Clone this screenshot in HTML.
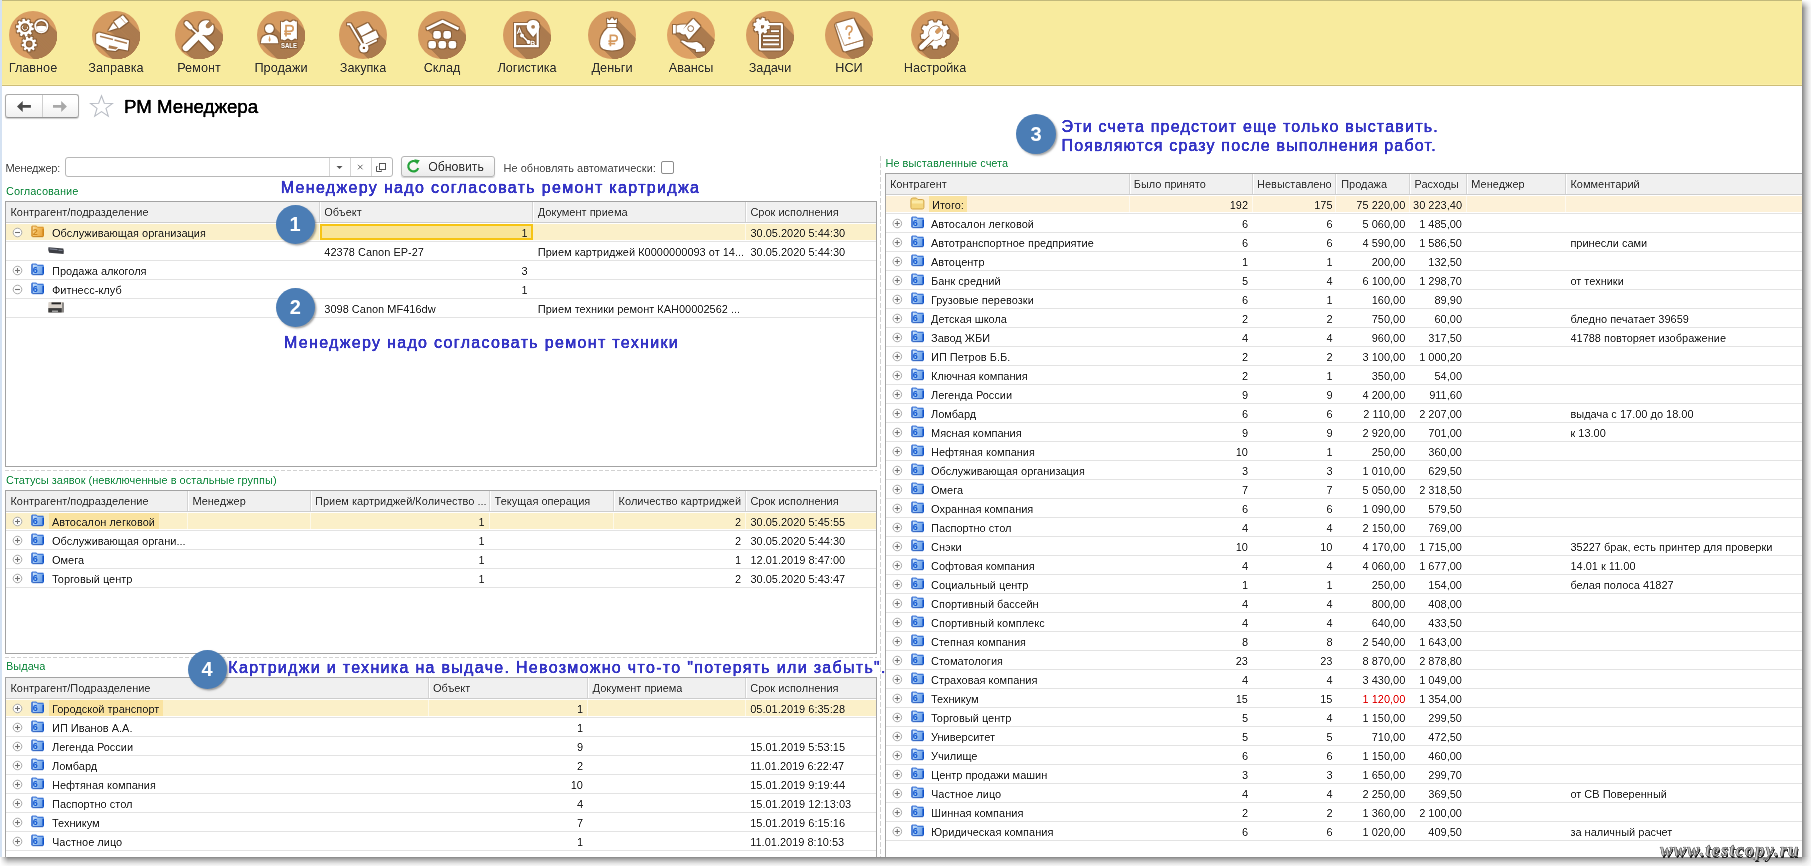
<!DOCTYPE html><html><head><meta charset="utf-8"><style>
html,body{margin:0;padding:0;}
body{width:1811px;height:866px;position:relative;overflow:hidden;background:#fff;font-family:"Liberation Sans", sans-serif;}
div{box-sizing:border-box;}
</style></head><body>
<div style="position:absolute;left:0px;top:0px;width:1802px;height:857px;background:#fff;overflow:hidden"></div>
<div style="position:absolute;left:0px;top:0px;width:2px;height:857px;background:#d5e2f2"></div>
<div style="position:absolute;left:2px;top:0px;width:1800px;height:86px;background:#f8eb9e;border-top:1px solid #c2b97b;border-bottom:1px solid #cdbd78"></div>
<div style="position:absolute;left:2px;top:84px;width:1800px;height:1px;background:#fbefa8"></div>
<svg style="position:absolute;left:0;top:0;will-change:transform" width="1000" height="86" viewBox="0 0 1000 86"><defs><g id="sil_glav"><path fill-rule="evenodd" d="M22.79 16.37 L24.90 16.98 L24.54 19.21 L22.35 19.14 L21.67 20.49 L23.01 22.22 L21.42 23.81 L19.69 22.47 L18.34 23.15 L18.41 25.34 L16.18 25.70 L15.57 23.59 L14.08 23.36 L12.85 25.17 L10.84 24.14 L11.59 22.08 L10.52 21.01 L8.46 21.76 L7.43 19.75 L9.24 18.52 L9.01 17.03 L6.90 16.42 L7.26 14.19 L9.45 14.26 L10.13 12.91 L8.79 11.18 L10.38 9.59 L12.11 10.93 L13.46 10.25 L13.39 8.06 L15.62 7.70 L16.23 9.81 L17.72 10.04 L18.95 8.23 L20.96 9.26 L20.21 11.32 L21.28 12.39 L23.34 11.64 L24.37 13.65 L22.56 14.88Z M11.5 16.7 a4.4 4.4 0 1 0 8.8 0 a4.4 4.4 0 1 0 -8.8 0Z"/><path fill-rule="evenodd" d="M25.299999999999997 15.2 a7 7 0 1 0 14 0 a7 7 0 1 0 -14 0Z M26.999999999999996 15.2 a5.3 5.3 0 1 0 10.6 0 a5.3 5.3 0 1 0 -10.6 0Z"/><path d="M27.1 15.6 Q32.3 13.8 37.5 15.6 Q37.2 20.5 32.3 20.6 Q27.4 20.5 27.1 15.6Z"/><path fill-rule="evenodd" d="M25.89 32.70 L27.80 33.27 L27.43 35.35 L25.45 35.23 L24.75 36.43 L25.85 38.09 L24.23 39.45 L22.79 38.08 L21.48 38.55 L21.26 40.53 L19.14 40.53 L18.92 38.55 L17.61 38.08 L16.17 39.45 L14.55 38.09 L15.65 36.43 L14.95 35.23 L12.97 35.35 L12.60 33.27 L14.51 32.70 L14.75 31.33 L13.15 30.15 L14.21 28.32 L16.03 29.11 L17.10 28.22 L16.63 26.29 L18.62 25.57 L19.51 27.34 L20.89 27.34 L21.78 25.57 L23.77 26.29 L23.30 28.22 L24.37 29.11 L26.19 28.32 L27.25 30.15 L25.65 31.33Z M16.8 33.0 a3.4 3.4 0 1 0 6.8 0 a3.4 3.4 0 1 0 -6.8 0Z"/><path d="M14.2 14.6 A2.6 2.6 0 1 0 18.3 15.6" fill="none" stroke-width="1"/></g><clipPath id="clip_glav"><circle cx="24" cy="24" r="24"/></clipPath><g id="sil_zapr"><path d="M22.0 10.5 L30.9 4.3 L36.3 10.5 L27.0 17.5Z"/><path d="M21.2 12.0 L25.6 17.0 L16.2 19.9Z"/><path d="M4.2 23.3 L6.9 21.4 L37.1 29.5 L35.9 39.5 L26.5 37.8 L23.5 40 L15 39 L14.3 37.6 L4.2 32.2Z"/></g><clipPath id="clip_zapr"><circle cx="24" cy="24" r="24"/></clipPath><g id="sil_rem"><path d="M11.6 12.4 L15.4 16.2" stroke-width="4.4" stroke-linecap="round"/><path d="M14.6 15.4 L25.6 25.2" stroke-width="1.9"/><path d="M27.2 28 L35.6 36.6" stroke-width="6.6" stroke-linecap="round"/><path d="M11 36.8 L22.6 25.2" stroke-width="6.6" stroke-linecap="round"/><path d="M19.5 28.5 L28.2 19.8" stroke-width="5.2"/><path d="M37.9 13.22 L34.52 16.59 A2.2 2.2 0 0 1 31.41 13.48 L34.78 10.10 A7.6 7.6 0 1 0 37.9 13.22 Z"/></g><clipPath id="clip_rem"><circle cx="24" cy="24" r="24"/></clipPath><g id="sil_prod"><path d="M8.0 17.6 a4.4 4.4 0 1 0 8.8 0 a4.4 4.4 0 1 0 -8.8 0Z"/><path d="M3.8 32.2 Q3.8 24 12.6 23.6 Q21.4 24 21.4 32.2Z"/><path d="M24 10.4 Q25.8 12 27.6 10.4 Q29.4 8.8 31.2 10.4 Q33 12 34.8 10.4 Q36.6 8.8 38.4 10.4 L39.9 10.6 L39.9 28.4 Q38.1 26.8 36.3 28.4 Q34.5 30 32.7 28.4 Q30.9 26.8 29.1 28.4 Q27.3 30 25.5 28.4 L24 28.4Z"/><text x="24" y="36.6" font-size="7.6" font-weight="bold" font-family="Liberation Sans" textLength="16" lengthAdjust="spacingAndGlyphs">SALE</text></g><clipPath id="clip_prod"><circle cx="24" cy="24" r="24"/></clipPath><g id="sil_zak"><path d="M8.1 13.2 L11.2 13.2 L24.9 36.4" stroke-width="1.9" fill="none" stroke-linejoin="round"/><path d="M20.299999999999997 36.9 a4.6 4.6 0 1 0 9.2 0 a4.6 4.6 0 1 0 -9.2 0Z"/><path d="M26.5 34.6 L37.8 29.2" stroke-width="1.9"/><path d="M17.9 17.5 L28.9 12 L33.5 18.9 L22.5 25Z"/><path d="M22.8 25.9 L36.8 19.4 L39.9 26.2 L25.4 32.9Z"/></g><clipPath id="clip_zak"><circle cx="24" cy="24" r="24"/></clipPath><g id="sil_sklad"><path d="M8.7 18 L24.6 10.3 L40.5 18" stroke-width="2.9" fill="none"/><rect x="15.3" y="20.099999999999998" width="7.6" height="7.6" rx="2.4"/><rect x="25.4" y="20.099999999999998" width="7.6" height="7.6" rx="2.4"/><rect x="10.399999999999999" y="29.900000000000002" width="7.6" height="7.6" rx="2.4"/><rect x="20.5" y="29.900000000000002" width="7.6" height="7.6" rx="2.4"/><rect x="30.599999999999998" y="29.900000000000002" width="7.6" height="7.6" rx="2.4"/></g><clipPath id="clip_sklad"><circle cx="24" cy="24" r="24"/></clipPath><g id="sil_log"><path fill-rule="evenodd" d="M11 12 L35.8 12 L35.8 36.2 L11 36.2Z M13.2 14.2 L33.6 14.2 L33.6 34 L13.2 34Z"/><path d="M30.1 26 L24.6 19.2 Q22.9 15.6 24.4 12.2 Q26.6 8.8 30.1 8.9 Q33.6 8.8 35.8 12.2 Q37.3 15.6 35.6 19.2Z"/><path d="M19 24.5 L25.5 31" stroke-width="1.6"/><circle cx="19" cy="24.5" r="1.9"/><circle cx="25.5" cy="31" r="1.9"/><path d="M14.3 22.8 L16.4 17.2 L18.5 22.8 M15.1 21 L17.7 21" fill="none" stroke-width="1.1"/><path d="M28.2 35.4 L28.2 30.3 L29.8 30.3 Q31.2 30.3 31.2 31.6 Q31.2 32.8 29.8 32.8 L28.2 32.8 M29.8 32.8 Q31.5 32.8 31.5 34.1 Q31.5 35.4 29.8 35.4 L28.2 35.4" fill="none" stroke-width="1.1"/></g><clipPath id="clip_log"><circle cx="24" cy="24" r="24"/></clipPath><g id="sil_den"><path d="M19.2 12 L19 7.4 L21.7 9.6 L24.1 6.6 L26.5 9.6 L29 7.4 L28.8 12Z"/><rect x="19.4" y="12.9" width="8.9" height="3.3" rx="0.8"/><path d="M19.6 17 L28.4 17 Q35.6 24 35.5 33 Q35.4 39.5 24 39.5 Q12.2 39.5 12.1 33 Q12 24 19.6 17Z"/></g><clipPath id="clip_den"><circle cx="24" cy="24" r="24"/></clipPath><g id="sil_av"><path d="M15.6 18.7 L26.3 7.7 L33.5 15.2 L21.8 28.5Z"/><path d="M6 14 L8.8 14 L8.8 22.5 L6 22.5Z"/><path d="M9.6 14.6 Q14 13 19.5 13.5 L16 18.8 L19.5 22.3 Q16 25 13 21.6 L9.6 21.6Z"/><path d="M13.8 30 Q15.5 28.8 20 31.2 L25.5 31.5 Q27.5 30.8 30 31 Q35 33 36 37.4 L29 38.6 Q21 37 13.8 30Z"/><path d="M28.7 37.6 L37.7 36.8 L38 40.2 L29 41Z"/></g><clipPath id="clip_av"><circle cx="24" cy="24" r="24"/></clipPath><g id="sil_zad"><path fill-rule="evenodd" d="M13 14 Q13 12 15 12 L35 12 Q37 12 37 14 L37 37.5 Q37 39.5 35 39.5 L15 39.5 Q13 39.5 13 37.5Z M15 14.2 L34.8 14.2 L34.8 37.3 L15 37.3Z"/><rect x="17" y="24.2" width="16" height="1.9"/><rect x="17" y="28.2" width="16" height="1.9"/><rect x="17" y="32.4" width="16" height="1.9"/><rect x="24.9" y="19.2" width="8.1" height="1.9"/><path fill-rule="evenodd" d="M22.09 14.48 L23.99 15.26 L23.37 18.08 L21.31 18.00 L20.48 19.19 L21.28 21.09 L18.84 22.65 L17.45 21.13 L16.02 21.39 L15.24 23.29 L12.42 22.67 L12.50 20.61 L11.31 19.78 L9.41 20.58 L7.85 18.14 L9.37 16.75 L9.11 15.32 L7.21 14.54 L7.83 11.72 L9.89 11.80 L10.72 10.61 L9.92 8.71 L12.36 7.15 L13.75 8.67 L15.18 8.41 L15.96 6.51 L18.78 7.13 L18.70 9.19 L19.89 10.02 L21.79 9.22 L23.35 11.66 L21.83 13.05Z M13.0 14.9 a2.6 2.6 0 1 0 5.2 0 a2.6 2.6 0 1 0 -5.2 0Z"/></g><clipPath id="clip_zad"><circle cx="24" cy="24" r="24"/></clipPath><g id="sil_nsi"><path d="M11.3 12.6 L28.6 7.4 L38.4 28.5 L19.4 34.3Z"/><path d="M10.1 14.3 L11 13 L20.3 34.8 L38.4 29.3 L38.2 35.2 L19.9 40.6 L18.2 39.5Z"/></g><clipPath id="clip_nsi"><circle cx="24" cy="24" r="24"/></clipPath><g id="sil_nast"><path fill-rule="evenodd" d="M36.08 22.68 L38.89 23.81 L38.19 27.81 L35.16 27.91 L33.72 30.40 L35.15 33.07 L32.04 35.68 L29.66 33.81 L26.95 34.80 L26.33 37.76 L22.27 37.76 L21.65 34.80 L18.94 33.81 L16.56 35.68 L13.45 33.07 L14.88 30.40 L13.44 27.91 L10.41 27.81 L9.71 23.81 L12.52 22.68 L13.02 19.85 L10.76 17.83 L12.80 14.31 L15.67 15.25 L17.87 13.40 L17.45 10.41 L21.26 9.02 L22.86 11.59 L25.74 11.59 L27.34 9.02 L31.15 10.41 L30.73 13.40 L32.93 15.25 L35.80 14.31 L37.84 17.83 L35.58 19.85Z"/><path d="M10.5 36.3 L19.5 27" stroke-width="5.6" stroke-linecap="round"/></g><clipPath id="clip_nast"><circle cx="24" cy="24" r="24"/></clipPath><filter id="dil" x="-20%" y="-20%" width="140%" height="140%"><feMorphology operator="dilate" radius="0.55"/></filter></defs><g transform="translate(9,11)"><circle cx="24" cy="24" r="24" fill="#d99d63"/><g clip-path="url(#clip_glav)" fill="#ab7b4f" stroke="#ab7b4f" stroke-width="0"><use href="#sil_glav" x="1" y="1"/><use href="#sil_glav" x="2" y="2"/><use href="#sil_glav" x="3" y="3"/><use href="#sil_glav" x="4" y="4"/><use href="#sil_glav" x="5" y="5"/><use href="#sil_glav" x="6" y="6"/><use href="#sil_glav" x="7" y="7"/><use href="#sil_glav" x="8" y="8"/><use href="#sil_glav" x="9" y="9"/><use href="#sil_glav" x="10" y="10"/><use href="#sil_glav" x="11" y="11"/><use href="#sil_glav" x="12" y="12"/><use href="#sil_glav" x="13" y="13"/><use href="#sil_glav" x="14" y="14"/><use href="#sil_glav" x="15" y="15"/><use href="#sil_glav" x="16" y="16"/><use href="#sil_glav" x="17" y="17"/><use href="#sil_glav" x="18" y="18"/><use href="#sil_glav" x="19" y="19"/><use href="#sil_glav" x="20" y="20"/><use href="#sil_glav" x="21" y="21"/><use href="#sil_glav" x="22" y="22"/><use href="#sil_glav" x="23" y="23"/><use href="#sil_glav" x="24" y="24"/><use href="#sil_glav" x="25" y="25"/><use href="#sil_glav" x="26" y="26"/><use href="#sil_glav" x="27" y="27"/><use href="#sil_glav" x="28" y="28"/><use href="#sil_glav" x="29" y="29"/><use href="#sil_glav" x="30" y="30"/><use href="#sil_glav" x="31" y="31"/><use href="#sil_glav" x="32" y="32"/><use href="#sil_glav" x="33" y="33"/><use href="#sil_glav" x="34" y="34"/><use href="#sil_glav" x="35" y="35"/><use href="#sil_glav" x="36" y="36"/><use href="#sil_glav" x="37" y="37"/><use href="#sil_glav" x="38" y="38"/><use href="#sil_glav" x="39" y="39"/></g><g fill="#7d5530" stroke="#7d5530" stroke-width="0" filter="url(#dil)" opacity="0.75"><path fill-rule="evenodd" d="M22.79 16.37 L24.90 16.98 L24.54 19.21 L22.35 19.14 L21.67 20.49 L23.01 22.22 L21.42 23.81 L19.69 22.47 L18.34 23.15 L18.41 25.34 L16.18 25.70 L15.57 23.59 L14.08 23.36 L12.85 25.17 L10.84 24.14 L11.59 22.08 L10.52 21.01 L8.46 21.76 L7.43 19.75 L9.24 18.52 L9.01 17.03 L6.90 16.42 L7.26 14.19 L9.45 14.26 L10.13 12.91 L8.79 11.18 L10.38 9.59 L12.11 10.93 L13.46 10.25 L13.39 8.06 L15.62 7.70 L16.23 9.81 L17.72 10.04 L18.95 8.23 L20.96 9.26 L20.21 11.32 L21.28 12.39 L23.34 11.64 L24.37 13.65 L22.56 14.88Z M11.5 16.7 a4.4 4.4 0 1 0 8.8 0 a4.4 4.4 0 1 0 -8.8 0Z"/><path fill-rule="evenodd" d="M25.299999999999997 15.2 a7 7 0 1 0 14 0 a7 7 0 1 0 -14 0Z M26.999999999999996 15.2 a5.3 5.3 0 1 0 10.6 0 a5.3 5.3 0 1 0 -10.6 0Z"/><path d="M27.1 15.6 Q32.3 13.8 37.5 15.6 Q37.2 20.5 32.3 20.6 Q27.4 20.5 27.1 15.6Z"/><path fill-rule="evenodd" d="M25.89 32.70 L27.80 33.27 L27.43 35.35 L25.45 35.23 L24.75 36.43 L25.85 38.09 L24.23 39.45 L22.79 38.08 L21.48 38.55 L21.26 40.53 L19.14 40.53 L18.92 38.55 L17.61 38.08 L16.17 39.45 L14.55 38.09 L15.65 36.43 L14.95 35.23 L12.97 35.35 L12.60 33.27 L14.51 32.70 L14.75 31.33 L13.15 30.15 L14.21 28.32 L16.03 29.11 L17.10 28.22 L16.63 26.29 L18.62 25.57 L19.51 27.34 L20.89 27.34 L21.78 25.57 L23.77 26.29 L23.30 28.22 L24.37 29.11 L26.19 28.32 L27.25 30.15 L25.65 31.33Z M16.8 33.0 a3.4 3.4 0 1 0 6.8 0 a3.4 3.4 0 1 0 -6.8 0Z"/><path d="M14.2 14.6 A2.6 2.6 0 1 0 18.3 15.6" fill="none" stroke-width="1"/></g><g fill="#fff" stroke="#fff" stroke-width="0"><path fill-rule="evenodd" d="M22.79 16.37 L24.90 16.98 L24.54 19.21 L22.35 19.14 L21.67 20.49 L23.01 22.22 L21.42 23.81 L19.69 22.47 L18.34 23.15 L18.41 25.34 L16.18 25.70 L15.57 23.59 L14.08 23.36 L12.85 25.17 L10.84 24.14 L11.59 22.08 L10.52 21.01 L8.46 21.76 L7.43 19.75 L9.24 18.52 L9.01 17.03 L6.90 16.42 L7.26 14.19 L9.45 14.26 L10.13 12.91 L8.79 11.18 L10.38 9.59 L12.11 10.93 L13.46 10.25 L13.39 8.06 L15.62 7.70 L16.23 9.81 L17.72 10.04 L18.95 8.23 L20.96 9.26 L20.21 11.32 L21.28 12.39 L23.34 11.64 L24.37 13.65 L22.56 14.88Z M11.5 16.7 a4.4 4.4 0 1 0 8.8 0 a4.4 4.4 0 1 0 -8.8 0Z"/><path fill-rule="evenodd" d="M25.299999999999997 15.2 a7 7 0 1 0 14 0 a7 7 0 1 0 -14 0Z M26.999999999999996 15.2 a5.3 5.3 0 1 0 10.6 0 a5.3 5.3 0 1 0 -10.6 0Z"/><path d="M27.1 15.6 Q32.3 13.8 37.5 15.6 Q37.2 20.5 32.3 20.6 Q27.4 20.5 27.1 15.6Z"/><path fill-rule="evenodd" d="M25.89 32.70 L27.80 33.27 L27.43 35.35 L25.45 35.23 L24.75 36.43 L25.85 38.09 L24.23 39.45 L22.79 38.08 L21.48 38.55 L21.26 40.53 L19.14 40.53 L18.92 38.55 L17.61 38.08 L16.17 39.45 L14.55 38.09 L15.65 36.43 L14.95 35.23 L12.97 35.35 L12.60 33.27 L14.51 32.70 L14.75 31.33 L13.15 30.15 L14.21 28.32 L16.03 29.11 L17.10 28.22 L16.63 26.29 L18.62 25.57 L19.51 27.34 L20.89 27.34 L21.78 25.57 L23.77 26.29 L23.30 28.22 L24.37 29.11 L26.19 28.32 L27.25 30.15 L25.65 31.33Z M16.8 33.0 a3.4 3.4 0 1 0 6.8 0 a3.4 3.4 0 1 0 -6.8 0Z"/><path d="M14.2 14.6 A2.6 2.6 0 1 0 18.3 15.6" fill="none" stroke-width="1"/></g></g><g transform="translate(92,11)"><circle cx="24" cy="24" r="24" fill="#d59a60"/><g clip-path="url(#clip_zapr)" fill="#ab7b4f" stroke="#ab7b4f" stroke-width="0"><use href="#sil_zapr" x="1" y="1"/><use href="#sil_zapr" x="2" y="2"/><use href="#sil_zapr" x="3" y="3"/><use href="#sil_zapr" x="4" y="4"/><use href="#sil_zapr" x="5" y="5"/><use href="#sil_zapr" x="6" y="6"/><use href="#sil_zapr" x="7" y="7"/><use href="#sil_zapr" x="8" y="8"/><use href="#sil_zapr" x="9" y="9"/><use href="#sil_zapr" x="10" y="10"/><use href="#sil_zapr" x="11" y="11"/><use href="#sil_zapr" x="12" y="12"/><use href="#sil_zapr" x="13" y="13"/><use href="#sil_zapr" x="14" y="14"/><use href="#sil_zapr" x="15" y="15"/><use href="#sil_zapr" x="16" y="16"/><use href="#sil_zapr" x="17" y="17"/><use href="#sil_zapr" x="18" y="18"/><use href="#sil_zapr" x="19" y="19"/><use href="#sil_zapr" x="20" y="20"/><use href="#sil_zapr" x="21" y="21"/><use href="#sil_zapr" x="22" y="22"/><use href="#sil_zapr" x="23" y="23"/><use href="#sil_zapr" x="24" y="24"/><use href="#sil_zapr" x="25" y="25"/><use href="#sil_zapr" x="26" y="26"/><use href="#sil_zapr" x="27" y="27"/><use href="#sil_zapr" x="28" y="28"/><use href="#sil_zapr" x="29" y="29"/><use href="#sil_zapr" x="30" y="30"/><use href="#sil_zapr" x="31" y="31"/><use href="#sil_zapr" x="32" y="32"/><use href="#sil_zapr" x="33" y="33"/><use href="#sil_zapr" x="34" y="34"/><use href="#sil_zapr" x="35" y="35"/><use href="#sil_zapr" x="36" y="36"/><use href="#sil_zapr" x="37" y="37"/><use href="#sil_zapr" x="38" y="38"/><use href="#sil_zapr" x="39" y="39"/></g><g fill="#7d5530" stroke="#7d5530" stroke-width="0" filter="url(#dil)" opacity="0.75"><path d="M22.0 10.5 L30.9 4.3 L36.3 10.5 L27.0 17.5Z"/><path d="M21.2 12.0 L25.6 17.0 L16.2 19.9Z"/><path d="M4.2 23.3 L6.9 21.4 L37.1 29.5 L35.9 39.5 L26.5 37.8 L23.5 40 L15 39 L14.3 37.6 L4.2 32.2Z"/></g><g fill="#fff" stroke="#fff" stroke-width="0"><path d="M22.0 10.5 L30.9 4.3 L36.3 10.5 L27.0 17.5Z"/><path d="M21.2 12.0 L25.6 17.0 L16.2 19.9Z"/><path d="M4.2 23.3 L6.9 21.4 L37.1 29.5 L35.9 39.5 L26.5 37.8 L23.5 40 L15 39 L14.3 37.6 L4.2 32.2Z"/></g><path d="M8 25.2 L21 28.6 M22.5 29 L35 32.2" stroke="#ab7b4f" stroke-width="1.5"/><path d="M17 34.3 L26 36.2 L24 38.4 L16.5 37.3Z" fill="#ab7b4f"/><path d="M28.5 6.5 L33.8 12.5" stroke="#ab7b4f" stroke-width="0.7"/></g><g transform="translate(175,11)"><circle cx="24" cy="24" r="24" fill="#d59a60"/><g clip-path="url(#clip_rem)" fill="#ab7b4f" stroke="#ab7b4f" stroke-width="0"><use href="#sil_rem" x="1" y="1"/><use href="#sil_rem" x="2" y="2"/><use href="#sil_rem" x="3" y="3"/><use href="#sil_rem" x="4" y="4"/><use href="#sil_rem" x="5" y="5"/><use href="#sil_rem" x="6" y="6"/><use href="#sil_rem" x="7" y="7"/><use href="#sil_rem" x="8" y="8"/><use href="#sil_rem" x="9" y="9"/><use href="#sil_rem" x="10" y="10"/><use href="#sil_rem" x="11" y="11"/><use href="#sil_rem" x="12" y="12"/><use href="#sil_rem" x="13" y="13"/><use href="#sil_rem" x="14" y="14"/><use href="#sil_rem" x="15" y="15"/><use href="#sil_rem" x="16" y="16"/><use href="#sil_rem" x="17" y="17"/><use href="#sil_rem" x="18" y="18"/><use href="#sil_rem" x="19" y="19"/><use href="#sil_rem" x="20" y="20"/><use href="#sil_rem" x="21" y="21"/><use href="#sil_rem" x="22" y="22"/><use href="#sil_rem" x="23" y="23"/><use href="#sil_rem" x="24" y="24"/><use href="#sil_rem" x="25" y="25"/><use href="#sil_rem" x="26" y="26"/><use href="#sil_rem" x="27" y="27"/><use href="#sil_rem" x="28" y="28"/><use href="#sil_rem" x="29" y="29"/><use href="#sil_rem" x="30" y="30"/><use href="#sil_rem" x="31" y="31"/><use href="#sil_rem" x="32" y="32"/><use href="#sil_rem" x="33" y="33"/><use href="#sil_rem" x="34" y="34"/><use href="#sil_rem" x="35" y="35"/><use href="#sil_rem" x="36" y="36"/><use href="#sil_rem" x="37" y="37"/><use href="#sil_rem" x="38" y="38"/><use href="#sil_rem" x="39" y="39"/></g><g fill="#7d5530" stroke="#7d5530" stroke-width="0" filter="url(#dil)" opacity="0.75"><path d="M11.6 12.4 L15.4 16.2" stroke-width="4.4" stroke-linecap="round"/><path d="M14.6 15.4 L25.6 25.2" stroke-width="1.9"/><path d="M27.2 28 L35.6 36.6" stroke-width="6.6" stroke-linecap="round"/><path d="M11 36.8 L22.6 25.2" stroke-width="6.6" stroke-linecap="round"/><path d="M19.5 28.5 L28.2 19.8" stroke-width="5.2"/><path d="M37.9 13.22 L34.52 16.59 A2.2 2.2 0 0 1 31.41 13.48 L34.78 10.10 A7.6 7.6 0 1 0 37.9 13.22 Z"/></g><g fill="#fff" stroke="#fff" stroke-width="0"><path d="M11.6 12.4 L15.4 16.2" stroke-width="4.4" stroke-linecap="round"/><path d="M14.6 15.4 L25.6 25.2" stroke-width="1.9"/><path d="M27.2 28 L35.6 36.6" stroke-width="6.6" stroke-linecap="round"/><path d="M11 36.8 L22.6 25.2" stroke-width="6.6" stroke-linecap="round"/><path d="M19.5 28.5 L28.2 19.8" stroke-width="5.2"/><path d="M37.9 13.22 L34.52 16.59 A2.2 2.2 0 0 1 31.41 13.48 L34.78 10.10 A7.6 7.6 0 1 0 37.9 13.22 Z"/></g><path d="M37.9 13.22 L34.52 16.59 A2.2 2.2 0 0 1 31.41 13.48 L34.78 10.10 A7.6 7.6 0 0 1 37.9 13.22 Z" fill="#ab7b4f"/></g><g transform="translate(257,11)"><circle cx="24" cy="24" r="24" fill="#d59a60"/><g clip-path="url(#clip_prod)" fill="#ab7b4f" stroke="#ab7b4f" stroke-width="0"><use href="#sil_prod" x="1" y="1"/><use href="#sil_prod" x="2" y="2"/><use href="#sil_prod" x="3" y="3"/><use href="#sil_prod" x="4" y="4"/><use href="#sil_prod" x="5" y="5"/><use href="#sil_prod" x="6" y="6"/><use href="#sil_prod" x="7" y="7"/><use href="#sil_prod" x="8" y="8"/><use href="#sil_prod" x="9" y="9"/><use href="#sil_prod" x="10" y="10"/><use href="#sil_prod" x="11" y="11"/><use href="#sil_prod" x="12" y="12"/><use href="#sil_prod" x="13" y="13"/><use href="#sil_prod" x="14" y="14"/><use href="#sil_prod" x="15" y="15"/><use href="#sil_prod" x="16" y="16"/><use href="#sil_prod" x="17" y="17"/><use href="#sil_prod" x="18" y="18"/><use href="#sil_prod" x="19" y="19"/><use href="#sil_prod" x="20" y="20"/><use href="#sil_prod" x="21" y="21"/><use href="#sil_prod" x="22" y="22"/><use href="#sil_prod" x="23" y="23"/><use href="#sil_prod" x="24" y="24"/><use href="#sil_prod" x="25" y="25"/><use href="#sil_prod" x="26" y="26"/><use href="#sil_prod" x="27" y="27"/><use href="#sil_prod" x="28" y="28"/><use href="#sil_prod" x="29" y="29"/><use href="#sil_prod" x="30" y="30"/><use href="#sil_prod" x="31" y="31"/><use href="#sil_prod" x="32" y="32"/><use href="#sil_prod" x="33" y="33"/><use href="#sil_prod" x="34" y="34"/><use href="#sil_prod" x="35" y="35"/><use href="#sil_prod" x="36" y="36"/><use href="#sil_prod" x="37" y="37"/><use href="#sil_prod" x="38" y="38"/><use href="#sil_prod" x="39" y="39"/></g><g fill="#7d5530" stroke="#7d5530" stroke-width="0" filter="url(#dil)" opacity="0.75"><path d="M8.0 17.6 a4.4 4.4 0 1 0 8.8 0 a4.4 4.4 0 1 0 -8.8 0Z"/><path d="M3.8 32.2 Q3.8 24 12.6 23.6 Q21.4 24 21.4 32.2Z"/><path d="M24 10.4 Q25.8 12 27.6 10.4 Q29.4 8.8 31.2 10.4 Q33 12 34.8 10.4 Q36.6 8.8 38.4 10.4 L39.9 10.6 L39.9 28.4 Q38.1 26.8 36.3 28.4 Q34.5 30 32.7 28.4 Q30.9 26.8 29.1 28.4 Q27.3 30 25.5 28.4 L24 28.4Z"/><text x="24" y="36.6" font-size="7.6" font-weight="bold" font-family="Liberation Sans" textLength="16" lengthAdjust="spacingAndGlyphs">SALE</text></g><g fill="#fff" stroke="#fff" stroke-width="0"><path d="M8.0 17.6 a4.4 4.4 0 1 0 8.8 0 a4.4 4.4 0 1 0 -8.8 0Z"/><path d="M3.8 32.2 Q3.8 24 12.6 23.6 Q21.4 24 21.4 32.2Z"/><path d="M24 10.4 Q25.8 12 27.6 10.4 Q29.4 8.8 31.2 10.4 Q33 12 34.8 10.4 Q36.6 8.8 38.4 10.4 L39.9 10.6 L39.9 28.4 Q38.1 26.8 36.3 28.4 Q34.5 30 32.7 28.4 Q30.9 26.8 29.1 28.4 Q27.3 30 25.5 28.4 L24 28.4Z"/><text x="24" y="36.6" font-size="7.6" font-weight="bold" font-family="Liberation Sans" textLength="16" lengthAdjust="spacingAndGlyphs">SALE</text></g><path d="M12.6 24.5 L11.5 29 L12.6 31 L13.7 29Z" fill="#d59a60"/><path d="M29 25.6 L29 14.6 L33 14.6 Q36.2 14.6 36.2 17.5 Q36.2 20.4 33 20.4 L27.2 20.4 M27.2 22.8 L34 22.8" stroke="#d59a60" stroke-width="1.7" fill="none"/></g><g transform="translate(339,11)"><circle cx="24" cy="24" r="24" fill="#d59a60"/><g clip-path="url(#clip_zak)" fill="#ab7b4f" stroke="#ab7b4f" stroke-width="0"><use href="#sil_zak" x="1" y="1"/><use href="#sil_zak" x="2" y="2"/><use href="#sil_zak" x="3" y="3"/><use href="#sil_zak" x="4" y="4"/><use href="#sil_zak" x="5" y="5"/><use href="#sil_zak" x="6" y="6"/><use href="#sil_zak" x="7" y="7"/><use href="#sil_zak" x="8" y="8"/><use href="#sil_zak" x="9" y="9"/><use href="#sil_zak" x="10" y="10"/><use href="#sil_zak" x="11" y="11"/><use href="#sil_zak" x="12" y="12"/><use href="#sil_zak" x="13" y="13"/><use href="#sil_zak" x="14" y="14"/><use href="#sil_zak" x="15" y="15"/><use href="#sil_zak" x="16" y="16"/><use href="#sil_zak" x="17" y="17"/><use href="#sil_zak" x="18" y="18"/><use href="#sil_zak" x="19" y="19"/><use href="#sil_zak" x="20" y="20"/><use href="#sil_zak" x="21" y="21"/><use href="#sil_zak" x="22" y="22"/><use href="#sil_zak" x="23" y="23"/><use href="#sil_zak" x="24" y="24"/><use href="#sil_zak" x="25" y="25"/><use href="#sil_zak" x="26" y="26"/><use href="#sil_zak" x="27" y="27"/><use href="#sil_zak" x="28" y="28"/><use href="#sil_zak" x="29" y="29"/><use href="#sil_zak" x="30" y="30"/><use href="#sil_zak" x="31" y="31"/><use href="#sil_zak" x="32" y="32"/><use href="#sil_zak" x="33" y="33"/><use href="#sil_zak" x="34" y="34"/><use href="#sil_zak" x="35" y="35"/><use href="#sil_zak" x="36" y="36"/><use href="#sil_zak" x="37" y="37"/><use href="#sil_zak" x="38" y="38"/><use href="#sil_zak" x="39" y="39"/></g><g fill="#7d5530" stroke="#7d5530" stroke-width="0" filter="url(#dil)" opacity="0.75"><path d="M8.1 13.2 L11.2 13.2 L24.9 36.4" stroke-width="1.9" fill="none" stroke-linejoin="round"/><path d="M20.299999999999997 36.9 a4.6 4.6 0 1 0 9.2 0 a4.6 4.6 0 1 0 -9.2 0Z"/><path d="M26.5 34.6 L37.8 29.2" stroke-width="1.9"/><path d="M17.9 17.5 L28.9 12 L33.5 18.9 L22.5 25Z"/><path d="M22.8 25.9 L36.8 19.4 L39.9 26.2 L25.4 32.9Z"/></g><g fill="#fff" stroke="#fff" stroke-width="0"><path d="M8.1 13.2 L11.2 13.2 L24.9 36.4" stroke-width="1.9" fill="none" stroke-linejoin="round"/><path d="M20.299999999999997 36.9 a4.6 4.6 0 1 0 9.2 0 a4.6 4.6 0 1 0 -9.2 0Z"/><path d="M26.5 34.6 L37.8 29.2" stroke-width="1.9"/><path d="M17.9 17.5 L28.9 12 L33.5 18.9 L22.5 25Z"/><path d="M22.8 25.9 L36.8 19.4 L39.9 26.2 L25.4 32.9Z"/></g><circle cx="24.9" cy="36.9" r="1.2" fill="#7a4a20"/></g><g transform="translate(418,11)"><circle cx="24" cy="24" r="24" fill="#d59a60"/><g clip-path="url(#clip_sklad)" fill="#ab7b4f" stroke="#ab7b4f" stroke-width="0"><use href="#sil_sklad" x="1" y="1"/><use href="#sil_sklad" x="2" y="2"/><use href="#sil_sklad" x="3" y="3"/><use href="#sil_sklad" x="4" y="4"/><use href="#sil_sklad" x="5" y="5"/><use href="#sil_sklad" x="6" y="6"/><use href="#sil_sklad" x="7" y="7"/><use href="#sil_sklad" x="8" y="8"/><use href="#sil_sklad" x="9" y="9"/><use href="#sil_sklad" x="10" y="10"/><use href="#sil_sklad" x="11" y="11"/><use href="#sil_sklad" x="12" y="12"/><use href="#sil_sklad" x="13" y="13"/><use href="#sil_sklad" x="14" y="14"/><use href="#sil_sklad" x="15" y="15"/><use href="#sil_sklad" x="16" y="16"/><use href="#sil_sklad" x="17" y="17"/><use href="#sil_sklad" x="18" y="18"/><use href="#sil_sklad" x="19" y="19"/><use href="#sil_sklad" x="20" y="20"/><use href="#sil_sklad" x="21" y="21"/><use href="#sil_sklad" x="22" y="22"/><use href="#sil_sklad" x="23" y="23"/><use href="#sil_sklad" x="24" y="24"/><use href="#sil_sklad" x="25" y="25"/><use href="#sil_sklad" x="26" y="26"/><use href="#sil_sklad" x="27" y="27"/><use href="#sil_sklad" x="28" y="28"/><use href="#sil_sklad" x="29" y="29"/><use href="#sil_sklad" x="30" y="30"/><use href="#sil_sklad" x="31" y="31"/><use href="#sil_sklad" x="32" y="32"/><use href="#sil_sklad" x="33" y="33"/><use href="#sil_sklad" x="34" y="34"/><use href="#sil_sklad" x="35" y="35"/><use href="#sil_sklad" x="36" y="36"/><use href="#sil_sklad" x="37" y="37"/><use href="#sil_sklad" x="38" y="38"/><use href="#sil_sklad" x="39" y="39"/></g><g fill="#7d5530" stroke="#7d5530" stroke-width="0" filter="url(#dil)" opacity="0.75"><path d="M8.7 18 L24.6 10.3 L40.5 18" stroke-width="2.9" fill="none"/><rect x="15.3" y="20.099999999999998" width="7.6" height="7.6" rx="2.4"/><rect x="25.4" y="20.099999999999998" width="7.6" height="7.6" rx="2.4"/><rect x="10.399999999999999" y="29.900000000000002" width="7.6" height="7.6" rx="2.4"/><rect x="20.5" y="29.900000000000002" width="7.6" height="7.6" rx="2.4"/><rect x="30.599999999999998" y="29.900000000000002" width="7.6" height="7.6" rx="2.4"/></g><g fill="#fff" stroke="#fff" stroke-width="0"><path d="M8.7 18 L24.6 10.3 L40.5 18" stroke-width="2.9" fill="none"/><rect x="15.3" y="20.099999999999998" width="7.6" height="7.6" rx="2.4"/><rect x="25.4" y="20.099999999999998" width="7.6" height="7.6" rx="2.4"/><rect x="10.399999999999999" y="29.900000000000002" width="7.6" height="7.6" rx="2.4"/><rect x="20.5" y="29.900000000000002" width="7.6" height="7.6" rx="2.4"/><rect x="30.599999999999998" y="29.900000000000002" width="7.6" height="7.6" rx="2.4"/></g></g><g transform="translate(503,11)"><circle cx="24" cy="24" r="24" fill="#d59a60"/><g clip-path="url(#clip_log)" fill="#ab7b4f" stroke="#ab7b4f" stroke-width="0"><use href="#sil_log" x="1" y="1"/><use href="#sil_log" x="2" y="2"/><use href="#sil_log" x="3" y="3"/><use href="#sil_log" x="4" y="4"/><use href="#sil_log" x="5" y="5"/><use href="#sil_log" x="6" y="6"/><use href="#sil_log" x="7" y="7"/><use href="#sil_log" x="8" y="8"/><use href="#sil_log" x="9" y="9"/><use href="#sil_log" x="10" y="10"/><use href="#sil_log" x="11" y="11"/><use href="#sil_log" x="12" y="12"/><use href="#sil_log" x="13" y="13"/><use href="#sil_log" x="14" y="14"/><use href="#sil_log" x="15" y="15"/><use href="#sil_log" x="16" y="16"/><use href="#sil_log" x="17" y="17"/><use href="#sil_log" x="18" y="18"/><use href="#sil_log" x="19" y="19"/><use href="#sil_log" x="20" y="20"/><use href="#sil_log" x="21" y="21"/><use href="#sil_log" x="22" y="22"/><use href="#sil_log" x="23" y="23"/><use href="#sil_log" x="24" y="24"/><use href="#sil_log" x="25" y="25"/><use href="#sil_log" x="26" y="26"/><use href="#sil_log" x="27" y="27"/><use href="#sil_log" x="28" y="28"/><use href="#sil_log" x="29" y="29"/><use href="#sil_log" x="30" y="30"/><use href="#sil_log" x="31" y="31"/><use href="#sil_log" x="32" y="32"/><use href="#sil_log" x="33" y="33"/><use href="#sil_log" x="34" y="34"/><use href="#sil_log" x="35" y="35"/><use href="#sil_log" x="36" y="36"/><use href="#sil_log" x="37" y="37"/><use href="#sil_log" x="38" y="38"/><use href="#sil_log" x="39" y="39"/></g><g fill="#7d5530" stroke="#7d5530" stroke-width="0" filter="url(#dil)" opacity="0.75"><path fill-rule="evenodd" d="M11 12 L35.8 12 L35.8 36.2 L11 36.2Z M13.2 14.2 L33.6 14.2 L33.6 34 L13.2 34Z"/><path d="M30.1 26 L24.6 19.2 Q22.9 15.6 24.4 12.2 Q26.6 8.8 30.1 8.9 Q33.6 8.8 35.8 12.2 Q37.3 15.6 35.6 19.2Z"/><path d="M19 24.5 L25.5 31" stroke-width="1.6"/><circle cx="19" cy="24.5" r="1.9"/><circle cx="25.5" cy="31" r="1.9"/><path d="M14.3 22.8 L16.4 17.2 L18.5 22.8 M15.1 21 L17.7 21" fill="none" stroke-width="1.1"/><path d="M28.2 35.4 L28.2 30.3 L29.8 30.3 Q31.2 30.3 31.2 31.6 Q31.2 32.8 29.8 32.8 L28.2 32.8 M29.8 32.8 Q31.5 32.8 31.5 34.1 Q31.5 35.4 29.8 35.4 L28.2 35.4" fill="none" stroke-width="1.1"/></g><g fill="#fff" stroke="#fff" stroke-width="0"><path fill-rule="evenodd" d="M11 12 L35.8 12 L35.8 36.2 L11 36.2Z M13.2 14.2 L33.6 14.2 L33.6 34 L13.2 34Z"/><path d="M30.1 26 L24.6 19.2 Q22.9 15.6 24.4 12.2 Q26.6 8.8 30.1 8.9 Q33.6 8.8 35.8 12.2 Q37.3 15.6 35.6 19.2Z"/><path d="M19 24.5 L25.5 31" stroke-width="1.6"/><circle cx="19" cy="24.5" r="1.9"/><circle cx="25.5" cy="31" r="1.9"/><path d="M14.3 22.8 L16.4 17.2 L18.5 22.8 M15.1 21 L17.7 21" fill="none" stroke-width="1.1"/><path d="M28.2 35.4 L28.2 30.3 L29.8 30.3 Q31.2 30.3 31.2 31.6 Q31.2 32.8 29.8 32.8 L28.2 32.8 M29.8 32.8 Q31.5 32.8 31.5 34.1 Q31.5 35.4 29.8 35.4 L28.2 35.4" fill="none" stroke-width="1.1"/></g><circle cx="30.1" cy="15.8" r="1.9" fill="#ab7b4f"/></g><g transform="translate(588,11)"><circle cx="24" cy="24" r="24" fill="#d59a60"/><g clip-path="url(#clip_den)" fill="#ab7b4f" stroke="#ab7b4f" stroke-width="0"><use href="#sil_den" x="1" y="1"/><use href="#sil_den" x="2" y="2"/><use href="#sil_den" x="3" y="3"/><use href="#sil_den" x="4" y="4"/><use href="#sil_den" x="5" y="5"/><use href="#sil_den" x="6" y="6"/><use href="#sil_den" x="7" y="7"/><use href="#sil_den" x="8" y="8"/><use href="#sil_den" x="9" y="9"/><use href="#sil_den" x="10" y="10"/><use href="#sil_den" x="11" y="11"/><use href="#sil_den" x="12" y="12"/><use href="#sil_den" x="13" y="13"/><use href="#sil_den" x="14" y="14"/><use href="#sil_den" x="15" y="15"/><use href="#sil_den" x="16" y="16"/><use href="#sil_den" x="17" y="17"/><use href="#sil_den" x="18" y="18"/><use href="#sil_den" x="19" y="19"/><use href="#sil_den" x="20" y="20"/><use href="#sil_den" x="21" y="21"/><use href="#sil_den" x="22" y="22"/><use href="#sil_den" x="23" y="23"/><use href="#sil_den" x="24" y="24"/><use href="#sil_den" x="25" y="25"/><use href="#sil_den" x="26" y="26"/><use href="#sil_den" x="27" y="27"/><use href="#sil_den" x="28" y="28"/><use href="#sil_den" x="29" y="29"/><use href="#sil_den" x="30" y="30"/><use href="#sil_den" x="31" y="31"/><use href="#sil_den" x="32" y="32"/><use href="#sil_den" x="33" y="33"/><use href="#sil_den" x="34" y="34"/><use href="#sil_den" x="35" y="35"/><use href="#sil_den" x="36" y="36"/><use href="#sil_den" x="37" y="37"/><use href="#sil_den" x="38" y="38"/><use href="#sil_den" x="39" y="39"/></g><g fill="#7d5530" stroke="#7d5530" stroke-width="0" filter="url(#dil)" opacity="0.75"><path d="M19.2 12 L19 7.4 L21.7 9.6 L24.1 6.6 L26.5 9.6 L29 7.4 L28.8 12Z"/><rect x="19.4" y="12.9" width="8.9" height="3.3" rx="0.8"/><path d="M19.6 17 L28.4 17 Q35.6 24 35.5 33 Q35.4 39.5 24 39.5 Q12.2 39.5 12.1 33 Q12 24 19.6 17Z"/></g><g fill="#fff" stroke="#fff" stroke-width="0"><path d="M19.2 12 L19 7.4 L21.7 9.6 L24.1 6.6 L26.5 9.6 L29 7.4 L28.8 12Z"/><rect x="19.4" y="12.9" width="8.9" height="3.3" rx="0.8"/><path d="M19.6 17 L28.4 17 Q35.6 24 35.5 33 Q35.4 39.5 24 39.5 Q12.2 39.5 12.1 33 Q12 24 19.6 17Z"/></g><path d="M22.4 35.2 L22.4 24.4 L26.2 24.4 Q29.2 24.4 29.2 27.3 Q29.2 30.2 26.2 30.2 L20.4 30.2 M20.4 32.6 L27.2 32.6" stroke="#d59a60" stroke-width="1.7" fill="none"/></g><g transform="translate(667,11)"><circle cx="24" cy="24" r="24" fill="#dea164"/><g clip-path="url(#clip_av)" fill="#ab7b4f" stroke="#ab7b4f" stroke-width="0"><use href="#sil_av" x="1" y="1"/><use href="#sil_av" x="2" y="2"/><use href="#sil_av" x="3" y="3"/><use href="#sil_av" x="4" y="4"/><use href="#sil_av" x="5" y="5"/><use href="#sil_av" x="6" y="6"/><use href="#sil_av" x="7" y="7"/><use href="#sil_av" x="8" y="8"/><use href="#sil_av" x="9" y="9"/><use href="#sil_av" x="10" y="10"/><use href="#sil_av" x="11" y="11"/><use href="#sil_av" x="12" y="12"/><use href="#sil_av" x="13" y="13"/><use href="#sil_av" x="14" y="14"/><use href="#sil_av" x="15" y="15"/><use href="#sil_av" x="16" y="16"/><use href="#sil_av" x="17" y="17"/><use href="#sil_av" x="18" y="18"/><use href="#sil_av" x="19" y="19"/><use href="#sil_av" x="20" y="20"/><use href="#sil_av" x="21" y="21"/><use href="#sil_av" x="22" y="22"/><use href="#sil_av" x="23" y="23"/><use href="#sil_av" x="24" y="24"/><use href="#sil_av" x="25" y="25"/><use href="#sil_av" x="26" y="26"/><use href="#sil_av" x="27" y="27"/><use href="#sil_av" x="28" y="28"/><use href="#sil_av" x="29" y="29"/><use href="#sil_av" x="30" y="30"/><use href="#sil_av" x="31" y="31"/><use href="#sil_av" x="32" y="32"/><use href="#sil_av" x="33" y="33"/><use href="#sil_av" x="34" y="34"/><use href="#sil_av" x="35" y="35"/><use href="#sil_av" x="36" y="36"/><use href="#sil_av" x="37" y="37"/><use href="#sil_av" x="38" y="38"/><use href="#sil_av" x="39" y="39"/></g><g fill="#7d5530" stroke="#7d5530" stroke-width="0" filter="url(#dil)" opacity="0.75"><path d="M15.6 18.7 L26.3 7.7 L33.5 15.2 L21.8 28.5Z"/><path d="M6 14 L8.8 14 L8.8 22.5 L6 22.5Z"/><path d="M9.6 14.6 Q14 13 19.5 13.5 L16 18.8 L19.5 22.3 Q16 25 13 21.6 L9.6 21.6Z"/><path d="M13.8 30 Q15.5 28.8 20 31.2 L25.5 31.5 Q27.5 30.8 30 31 Q35 33 36 37.4 L29 38.6 Q21 37 13.8 30Z"/><path d="M28.7 37.6 L37.7 36.8 L38 40.2 L29 41Z"/></g><g fill="#fff" stroke="#fff" stroke-width="0"><path d="M15.6 18.7 L26.3 7.7 L33.5 15.2 L21.8 28.5Z"/><path d="M6 14 L8.8 14 L8.8 22.5 L6 22.5Z"/><path d="M9.6 14.6 Q14 13 19.5 13.5 L16 18.8 L19.5 22.3 Q16 25 13 21.6 L9.6 21.6Z"/><path d="M13.8 30 Q15.5 28.8 20 31.2 L25.5 31.5 Q27.5 30.8 30 31 Q35 33 36 37.4 L29 38.6 Q21 37 13.8 30Z"/><path d="M28.7 37.6 L37.7 36.8 L38 40.2 L29 41Z"/></g><circle cx="23.7" cy="17.6" r="2.9" fill="none" stroke="#8a5a30" stroke-width="0.9"/></g><g transform="translate(746,11)"><circle cx="24" cy="24" r="24" fill="#d59a60"/><g clip-path="url(#clip_zad)" fill="#ab7b4f" stroke="#ab7b4f" stroke-width="0"><use href="#sil_zad" x="1" y="1"/><use href="#sil_zad" x="2" y="2"/><use href="#sil_zad" x="3" y="3"/><use href="#sil_zad" x="4" y="4"/><use href="#sil_zad" x="5" y="5"/><use href="#sil_zad" x="6" y="6"/><use href="#sil_zad" x="7" y="7"/><use href="#sil_zad" x="8" y="8"/><use href="#sil_zad" x="9" y="9"/><use href="#sil_zad" x="10" y="10"/><use href="#sil_zad" x="11" y="11"/><use href="#sil_zad" x="12" y="12"/><use href="#sil_zad" x="13" y="13"/><use href="#sil_zad" x="14" y="14"/><use href="#sil_zad" x="15" y="15"/><use href="#sil_zad" x="16" y="16"/><use href="#sil_zad" x="17" y="17"/><use href="#sil_zad" x="18" y="18"/><use href="#sil_zad" x="19" y="19"/><use href="#sil_zad" x="20" y="20"/><use href="#sil_zad" x="21" y="21"/><use href="#sil_zad" x="22" y="22"/><use href="#sil_zad" x="23" y="23"/><use href="#sil_zad" x="24" y="24"/><use href="#sil_zad" x="25" y="25"/><use href="#sil_zad" x="26" y="26"/><use href="#sil_zad" x="27" y="27"/><use href="#sil_zad" x="28" y="28"/><use href="#sil_zad" x="29" y="29"/><use href="#sil_zad" x="30" y="30"/><use href="#sil_zad" x="31" y="31"/><use href="#sil_zad" x="32" y="32"/><use href="#sil_zad" x="33" y="33"/><use href="#sil_zad" x="34" y="34"/><use href="#sil_zad" x="35" y="35"/><use href="#sil_zad" x="36" y="36"/><use href="#sil_zad" x="37" y="37"/><use href="#sil_zad" x="38" y="38"/><use href="#sil_zad" x="39" y="39"/></g><g fill="#7d5530" stroke="#7d5530" stroke-width="0" filter="url(#dil)" opacity="0.75"><path fill-rule="evenodd" d="M13 14 Q13 12 15 12 L35 12 Q37 12 37 14 L37 37.5 Q37 39.5 35 39.5 L15 39.5 Q13 39.5 13 37.5Z M15 14.2 L34.8 14.2 L34.8 37.3 L15 37.3Z"/><rect x="17" y="24.2" width="16" height="1.9"/><rect x="17" y="28.2" width="16" height="1.9"/><rect x="17" y="32.4" width="16" height="1.9"/><rect x="24.9" y="19.2" width="8.1" height="1.9"/><path fill-rule="evenodd" d="M22.09 14.48 L23.99 15.26 L23.37 18.08 L21.31 18.00 L20.48 19.19 L21.28 21.09 L18.84 22.65 L17.45 21.13 L16.02 21.39 L15.24 23.29 L12.42 22.67 L12.50 20.61 L11.31 19.78 L9.41 20.58 L7.85 18.14 L9.37 16.75 L9.11 15.32 L7.21 14.54 L7.83 11.72 L9.89 11.80 L10.72 10.61 L9.92 8.71 L12.36 7.15 L13.75 8.67 L15.18 8.41 L15.96 6.51 L18.78 7.13 L18.70 9.19 L19.89 10.02 L21.79 9.22 L23.35 11.66 L21.83 13.05Z M13.0 14.9 a2.6 2.6 0 1 0 5.2 0 a2.6 2.6 0 1 0 -5.2 0Z"/></g><g fill="#fff" stroke="#fff" stroke-width="0"><path fill-rule="evenodd" d="M13 14 Q13 12 15 12 L35 12 Q37 12 37 14 L37 37.5 Q37 39.5 35 39.5 L15 39.5 Q13 39.5 13 37.5Z M15 14.2 L34.8 14.2 L34.8 37.3 L15 37.3Z"/><rect x="17" y="24.2" width="16" height="1.9"/><rect x="17" y="28.2" width="16" height="1.9"/><rect x="17" y="32.4" width="16" height="1.9"/><rect x="24.9" y="19.2" width="8.1" height="1.9"/><path fill-rule="evenodd" d="M22.09 14.48 L23.99 15.26 L23.37 18.08 L21.31 18.00 L20.48 19.19 L21.28 21.09 L18.84 22.65 L17.45 21.13 L16.02 21.39 L15.24 23.29 L12.42 22.67 L12.50 20.61 L11.31 19.78 L9.41 20.58 L7.85 18.14 L9.37 16.75 L9.11 15.32 L7.21 14.54 L7.83 11.72 L9.89 11.80 L10.72 10.61 L9.92 8.71 L12.36 7.15 L13.75 8.67 L15.18 8.41 L15.96 6.51 L18.78 7.13 L18.70 9.19 L19.89 10.02 L21.79 9.22 L23.35 11.66 L21.83 13.05Z M13.0 14.9 a2.6 2.6 0 1 0 5.2 0 a2.6 2.6 0 1 0 -5.2 0Z"/></g></g><g transform="translate(825,11)"><circle cx="24" cy="24" r="24" fill="#d59a60"/><g clip-path="url(#clip_nsi)" fill="#ab7b4f" stroke="#ab7b4f" stroke-width="0"><use href="#sil_nsi" x="1" y="1"/><use href="#sil_nsi" x="2" y="2"/><use href="#sil_nsi" x="3" y="3"/><use href="#sil_nsi" x="4" y="4"/><use href="#sil_nsi" x="5" y="5"/><use href="#sil_nsi" x="6" y="6"/><use href="#sil_nsi" x="7" y="7"/><use href="#sil_nsi" x="8" y="8"/><use href="#sil_nsi" x="9" y="9"/><use href="#sil_nsi" x="10" y="10"/><use href="#sil_nsi" x="11" y="11"/><use href="#sil_nsi" x="12" y="12"/><use href="#sil_nsi" x="13" y="13"/><use href="#sil_nsi" x="14" y="14"/><use href="#sil_nsi" x="15" y="15"/><use href="#sil_nsi" x="16" y="16"/><use href="#sil_nsi" x="17" y="17"/><use href="#sil_nsi" x="18" y="18"/><use href="#sil_nsi" x="19" y="19"/><use href="#sil_nsi" x="20" y="20"/><use href="#sil_nsi" x="21" y="21"/><use href="#sil_nsi" x="22" y="22"/><use href="#sil_nsi" x="23" y="23"/><use href="#sil_nsi" x="24" y="24"/><use href="#sil_nsi" x="25" y="25"/><use href="#sil_nsi" x="26" y="26"/><use href="#sil_nsi" x="27" y="27"/><use href="#sil_nsi" x="28" y="28"/><use href="#sil_nsi" x="29" y="29"/><use href="#sil_nsi" x="30" y="30"/><use href="#sil_nsi" x="31" y="31"/><use href="#sil_nsi" x="32" y="32"/><use href="#sil_nsi" x="33" y="33"/><use href="#sil_nsi" x="34" y="34"/><use href="#sil_nsi" x="35" y="35"/><use href="#sil_nsi" x="36" y="36"/><use href="#sil_nsi" x="37" y="37"/><use href="#sil_nsi" x="38" y="38"/><use href="#sil_nsi" x="39" y="39"/></g><g fill="#7d5530" stroke="#7d5530" stroke-width="0" filter="url(#dil)" opacity="0.75"><path d="M11.3 12.6 L28.6 7.4 L38.4 28.5 L19.4 34.3Z"/><path d="M10.1 14.3 L11 13 L20.3 34.8 L38.4 29.3 L38.2 35.2 L19.9 40.6 L18.2 39.5Z"/></g><g fill="#fff" stroke="#fff" stroke-width="0"><path d="M11.3 12.6 L28.6 7.4 L38.4 28.5 L19.4 34.3Z"/><path d="M10.1 14.3 L11 13 L20.3 34.8 L38.4 29.3 L38.2 35.2 L19.9 40.6 L18.2 39.5Z"/></g><path d="M20.5 34.2 L38.4 28.8" stroke="#ab7b4f" stroke-width="0.9"/><path d="M19.6 35 L11 14" stroke="#ab7b4f" stroke-width="0.7"/><path d="M21.2 18.2 Q21.3 15.1 24 15 Q27.2 15 27 18.3 Q26.8 20.4 24.8 21.4 Q24 22 24.2 23.8" stroke="#d59a60" stroke-width="1.7" fill="none" stroke-linecap="round"/><circle cx="24.4" cy="27" r="1.2" fill="#d59a60"/></g><g transform="translate(911,11)"><circle cx="24" cy="24" r="24" fill="#d59a60"/><g clip-path="url(#clip_nast)" fill="#ab7b4f" stroke="#ab7b4f" stroke-width="0"><use href="#sil_nast" x="1" y="1"/><use href="#sil_nast" x="2" y="2"/><use href="#sil_nast" x="3" y="3"/><use href="#sil_nast" x="4" y="4"/><use href="#sil_nast" x="5" y="5"/><use href="#sil_nast" x="6" y="6"/><use href="#sil_nast" x="7" y="7"/><use href="#sil_nast" x="8" y="8"/><use href="#sil_nast" x="9" y="9"/><use href="#sil_nast" x="10" y="10"/><use href="#sil_nast" x="11" y="11"/><use href="#sil_nast" x="12" y="12"/><use href="#sil_nast" x="13" y="13"/><use href="#sil_nast" x="14" y="14"/><use href="#sil_nast" x="15" y="15"/><use href="#sil_nast" x="16" y="16"/><use href="#sil_nast" x="17" y="17"/><use href="#sil_nast" x="18" y="18"/><use href="#sil_nast" x="19" y="19"/><use href="#sil_nast" x="20" y="20"/><use href="#sil_nast" x="21" y="21"/><use href="#sil_nast" x="22" y="22"/><use href="#sil_nast" x="23" y="23"/><use href="#sil_nast" x="24" y="24"/><use href="#sil_nast" x="25" y="25"/><use href="#sil_nast" x="26" y="26"/><use href="#sil_nast" x="27" y="27"/><use href="#sil_nast" x="28" y="28"/><use href="#sil_nast" x="29" y="29"/><use href="#sil_nast" x="30" y="30"/><use href="#sil_nast" x="31" y="31"/><use href="#sil_nast" x="32" y="32"/><use href="#sil_nast" x="33" y="33"/><use href="#sil_nast" x="34" y="34"/><use href="#sil_nast" x="35" y="35"/><use href="#sil_nast" x="36" y="36"/><use href="#sil_nast" x="37" y="37"/><use href="#sil_nast" x="38" y="38"/><use href="#sil_nast" x="39" y="39"/></g><g fill="#7d5530" stroke="#7d5530" stroke-width="0" filter="url(#dil)" opacity="0.75"><path fill-rule="evenodd" d="M36.08 22.68 L38.89 23.81 L38.19 27.81 L35.16 27.91 L33.72 30.40 L35.15 33.07 L32.04 35.68 L29.66 33.81 L26.95 34.80 L26.33 37.76 L22.27 37.76 L21.65 34.80 L18.94 33.81 L16.56 35.68 L13.45 33.07 L14.88 30.40 L13.44 27.91 L10.41 27.81 L9.71 23.81 L12.52 22.68 L13.02 19.85 L10.76 17.83 L12.80 14.31 L15.67 15.25 L17.87 13.40 L17.45 10.41 L21.26 9.02 L22.86 11.59 L25.74 11.59 L27.34 9.02 L31.15 10.41 L30.73 13.40 L32.93 15.25 L35.80 14.31 L37.84 17.83 L35.58 19.85Z"/><path d="M10.5 36.3 L19.5 27" stroke-width="5.6" stroke-linecap="round"/></g><g fill="#fff" stroke="#fff" stroke-width="0"><path fill-rule="evenodd" d="M36.08 22.68 L38.89 23.81 L38.19 27.81 L35.16 27.91 L33.72 30.40 L35.15 33.07 L32.04 35.68 L29.66 33.81 L26.95 34.80 L26.33 37.76 L22.27 37.76 L21.65 34.80 L18.94 33.81 L16.56 35.68 L13.45 33.07 L14.88 30.40 L13.44 27.91 L10.41 27.81 L9.71 23.81 L12.52 22.68 L13.02 19.85 L10.76 17.83 L12.80 14.31 L15.67 15.25 L17.87 13.40 L17.45 10.41 L21.26 9.02 L22.86 11.59 L25.74 11.59 L27.34 9.02 L31.15 10.41 L30.73 13.40 L32.93 15.25 L35.80 14.31 L37.84 17.83 L35.58 19.85Z"/><path d="M10.5 36.3 L19.5 27" stroke-width="5.6" stroke-linecap="round"/></g><path d="M21.5 25.8 L10.5 36.3" stroke="#8a5a30" stroke-width="6.8" stroke-linecap="round"/><path d="M30.98 18.84 L27.73 22.1 A2 2 0 0 1 24.9 19.27 L28.16 16.02 A6.9 6.9 0 1 0 30.98 18.84 Z" fill="#fff" stroke="#8a5a30" stroke-width="1.1"/><path d="M21.5 25.8 L10.5 36.3" stroke="#fff" stroke-width="4.8" stroke-linecap="round"/><path d="M30.98 18.84 L27.73 22.1 A2 2 0 0 1 24.9 19.27 L28.16 16.02 A6.9 6.9 0 1 0 30.98 18.84 Z" fill="#fff"/><path d="M30.98 18.84 L27.73 22.1 A2 2 0 0 1 24.9 19.27 L28.16 16.02 A6.9 6.9 0 0 1 30.98 18.84 Z" fill="#d59a60"/></g></svg>
<div style="position:absolute;left:5px;top:94px;width:74px;height:24px;border:1px solid #ababab;border-bottom-color:#949494;border-radius:3px;background:linear-gradient(#ffffff 30%,#f0f0f0);box-shadow:0 1px 1px rgba(0,0,0,.2)"></div>
<div style="position:absolute;left:42px;top:95px;width:1px;height:22px;background:#cfcfcf"></div>
<svg style="position:absolute;left:5px;top:94px" width="74" height="24"><path d="M12 12.4 L17.7 7 L17.7 10.9 L25.9 10.9 L25.9 13.8 L17.7 13.8 L17.7 17.9Z" fill="#4a4a4a"/><path d="M61.9 12.4 L56.2 7 L56.2 10.9 L48 10.9 L48 13.8 L56.2 13.8 L56.2 17.9Z" fill="#a8a8a8"/></svg>
<svg style="position:absolute;left:89px;top:94px" width="26" height="25"><path d="M12.5 1.8 L15.3 9.3 L23.4 9.5 L17 14.4 L19.3 22.2 L12.5 17.6 L5.7 22.2 L8 14.4 L1.6 9.5 L9.7 9.3Z" fill="none" stroke="#b8bcc4" stroke-width="1.1"/></svg>
<div style="position:absolute;left:65px;top:157px;width:328px;height:20px;border:1px solid #b8b8b8;border-radius:3px;background:#fff"></div>
<div style="position:absolute;left:329px;top:158px;width:1px;height:18px;background:#d6d6d6"></div>
<div style="position:absolute;left:350px;top:158px;width:1px;height:18px;background:#d6d6d6"></div>
<div style="position:absolute;left:371px;top:158px;width:1px;height:18px;background:#d6d6d6"></div>
<svg style="position:absolute;left:329px;top:157px" width="64" height="20"><path d="M7.5 9 L13.5 9 L10.5 12Z" fill="#555"/><path d="M29 7.8 L33.5 12.3 M33.5 7.8 L29 12.3" stroke="#666" stroke-width="1"/><rect x="50.5" y="6.5" width="6" height="6" fill="none" stroke="#555" stroke-width="1"/><path d="M48.5 9.5 L47.5 9.5 L47.5 14.5 L52.5 14.5 L52.5 13.5" fill="none" stroke="#555" stroke-width="1"/></svg>
<div style="position:absolute;left:401px;top:156px;width:94px;height:21px;border:1px solid #b4b4b4;border-radius:3px;background:linear-gradient(#ffffff,#ebebeb);box-shadow:0 1px 1px rgba(0,0,0,.18)"></div>
<svg style="position:absolute;left:401px;top:156px" width="30" height="21"><path d="M15.8 6.2 A5.2 5.2 0 1 0 17.3 12.2" fill="none" stroke="#25a23a" stroke-width="2.2"/><path d="M13.3 3.3 L18.8 4.2 L16 8.6Z" fill="#25a23a"/></svg>
<div style="position:absolute;left:661px;top:161px;width:13px;height:13px;border:1px solid #8c8c8c;border-radius:2px;background:#fff"></div>
<div style="position:absolute;left:5px;top:470px;width:872px;height:1px;background:repeating-linear-gradient(to right,#d2d2d2 0 4px,transparent 4px 6px)"></div>
<div style="position:absolute;left:5px;top:657px;width:872px;height:1px;background:repeating-linear-gradient(to right,#d2d2d2 0 4px,transparent 4px 6px)"></div>
<div style="position:absolute;left:880px;top:156px;width:1px;height:701px;background:repeating-linear-gradient(to bottom,#d2d2d2 0 5px,transparent 5px 7px)"></div>
<div style="position:absolute;left:5px;top:201px;width:872px;height:266px;border:1px solid #a3a3a3;border-bottom:1px solid #a3a3a3;background:#fff"></div>
<div style="position:absolute;left:6px;top:202px;width:870px;height:20px;background:#f0f0f0"></div>
<div style="position:absolute;left:6px;top:222px;width:870px;height:1px;background:#cdcdcd"></div>
<div style="position:absolute;left:319px;top:202px;width:1px;height:20px;background:#d4d4d4"></div>
<div style="position:absolute;left:320px;top:202px;width:1px;height:20px;background:#fff"></div>
<div style="position:absolute;left:532px;top:202px;width:1px;height:20px;background:#d4d4d4"></div>
<div style="position:absolute;left:533px;top:202px;width:1px;height:20px;background:#fff"></div>
<div style="position:absolute;left:745px;top:202px;width:1px;height:20px;background:#d4d4d4"></div>
<div style="position:absolute;left:746px;top:202px;width:1px;height:20px;background:#fff"></div>
<div style="position:absolute;left:6px;top:224px;width:870px;height:16px;background:#fbf0c9"></div>
<div style="position:absolute;left:319px;top:224px;width:1px;height:16px;background:#fff;opacity:.6"></div>
<div style="position:absolute;left:532px;top:224px;width:1px;height:16px;background:#fff;opacity:.6"></div>
<div style="position:absolute;left:745px;top:224px;width:1px;height:16px;background:#fff;opacity:.6"></div>
<div style="position:absolute;left:6px;top:241px;width:870px;height:1px;background:#e3e3e3"></div>
<div style="position:absolute;left:320px;top:224px;width:213px;height:16px;border:2px solid #f6c413;background:#f9e598"></div>
<div style="position:absolute;left:6px;top:260px;width:870px;height:1px;background:#e3e3e3"></div>
<div style="position:absolute;left:6px;top:279px;width:870px;height:1px;background:#e3e3e3"></div>
<div style="position:absolute;left:6px;top:298px;width:870px;height:1px;background:#e3e3e3"></div>
<div style="position:absolute;left:6px;top:317px;width:870px;height:1px;background:#e3e3e3"></div>
<div style="position:absolute;left:5px;top:490px;width:872px;height:164px;border:1px solid #a3a3a3;border-bottom:1px solid #a3a3a3;background:#fff"></div>
<div style="position:absolute;left:6px;top:491px;width:870px;height:20px;background:#f0f0f0"></div>
<div style="position:absolute;left:6px;top:511px;width:870px;height:1px;background:#cdcdcd"></div>
<div style="position:absolute;left:187px;top:491px;width:1px;height:20px;background:#d4d4d4"></div>
<div style="position:absolute;left:188px;top:491px;width:1px;height:20px;background:#fff"></div>
<div style="position:absolute;left:310px;top:491px;width:1px;height:20px;background:#d4d4d4"></div>
<div style="position:absolute;left:311px;top:491px;width:1px;height:20px;background:#fff"></div>
<div style="position:absolute;left:489px;top:491px;width:1px;height:20px;background:#d4d4d4"></div>
<div style="position:absolute;left:490px;top:491px;width:1px;height:20px;background:#fff"></div>
<div style="position:absolute;left:613px;top:491px;width:1px;height:20px;background:#d4d4d4"></div>
<div style="position:absolute;left:614px;top:491px;width:1px;height:20px;background:#fff"></div>
<div style="position:absolute;left:745px;top:491px;width:1px;height:20px;background:#d4d4d4"></div>
<div style="position:absolute;left:746px;top:491px;width:1px;height:20px;background:#fff"></div>
<div style="position:absolute;left:6px;top:513px;width:870px;height:16px;background:#fbf0c9"></div>
<div style="position:absolute;left:187px;top:513px;width:1px;height:16px;background:#fff;opacity:.6"></div>
<div style="position:absolute;left:310px;top:513px;width:1px;height:16px;background:#fff;opacity:.6"></div>
<div style="position:absolute;left:489px;top:513px;width:1px;height:16px;background:#fff;opacity:.6"></div>
<div style="position:absolute;left:613px;top:513px;width:1px;height:16px;background:#fff;opacity:.6"></div>
<div style="position:absolute;left:745px;top:513px;width:1px;height:16px;background:#fff;opacity:.6"></div>
<div style="position:absolute;left:6px;top:530px;width:870px;height:1px;background:#e3e3e3"></div>
<div style="position:absolute;left:49px;top:513px;width:110px;height:16px;background:#fae3a0"></div>
<div style="position:absolute;left:6px;top:549px;width:870px;height:1px;background:#e3e3e3"></div>
<div style="position:absolute;left:6px;top:568px;width:870px;height:1px;background:#e3e3e3"></div>
<div style="position:absolute;left:6px;top:587px;width:870px;height:1px;background:#e3e3e3"></div>
<div style="position:absolute;left:5px;top:677px;width:872px;height:185px;border:1px solid #a3a3a3;background:#fff"></div>
<div style="position:absolute;left:6px;top:678px;width:870px;height:20px;background:#f0f0f0"></div>
<div style="position:absolute;left:6px;top:698px;width:870px;height:1px;background:#cdcdcd"></div>
<div style="position:absolute;left:428px;top:678px;width:1px;height:20px;background:#d4d4d4"></div>
<div style="position:absolute;left:429px;top:678px;width:1px;height:20px;background:#fff"></div>
<div style="position:absolute;left:587px;top:678px;width:1px;height:20px;background:#d4d4d4"></div>
<div style="position:absolute;left:588px;top:678px;width:1px;height:20px;background:#fff"></div>
<div style="position:absolute;left:745px;top:678px;width:1px;height:20px;background:#d4d4d4"></div>
<div style="position:absolute;left:746px;top:678px;width:1px;height:20px;background:#fff"></div>
<div style="position:absolute;left:6px;top:700px;width:870px;height:16px;background:#fbf0c9"></div>
<div style="position:absolute;left:428px;top:700px;width:1px;height:16px;background:#fff;opacity:.6"></div>
<div style="position:absolute;left:587px;top:700px;width:1px;height:16px;background:#fff;opacity:.6"></div>
<div style="position:absolute;left:745px;top:700px;width:1px;height:16px;background:#fff;opacity:.6"></div>
<div style="position:absolute;left:6px;top:717px;width:870px;height:1px;background:#e3e3e3"></div>
<div style="position:absolute;left:49px;top:700px;width:114px;height:16px;background:#fae3a0"></div>
<div style="position:absolute;left:6px;top:736px;width:870px;height:1px;background:#e3e3e3"></div>
<div style="position:absolute;left:6px;top:755px;width:870px;height:1px;background:#e3e3e3"></div>
<div style="position:absolute;left:6px;top:774px;width:870px;height:1px;background:#e3e3e3"></div>
<div style="position:absolute;left:6px;top:793px;width:870px;height:1px;background:#e3e3e3"></div>
<div style="position:absolute;left:6px;top:812px;width:870px;height:1px;background:#e3e3e3"></div>
<div style="position:absolute;left:6px;top:831px;width:870px;height:1px;background:#e3e3e3"></div>
<div style="position:absolute;left:6px;top:850px;width:870px;height:1px;background:#e3e3e3"></div>
<div style="position:absolute;left:885px;top:173px;width:918px;height:689px;border:1px solid #a3a3a3;background:#fff"></div>
<div style="position:absolute;left:886px;top:174px;width:916px;height:20px;background:#f0f0f0"></div>
<div style="position:absolute;left:886px;top:194px;width:916px;height:1px;background:#cdcdcd"></div>
<div style="position:absolute;left:1129px;top:174px;width:1px;height:20px;background:#d4d4d4"></div>
<div style="position:absolute;left:1130px;top:174px;width:1px;height:20px;background:#fff"></div>
<div style="position:absolute;left:1252px;top:174px;width:1px;height:20px;background:#d4d4d4"></div>
<div style="position:absolute;left:1253px;top:174px;width:1px;height:20px;background:#fff"></div>
<div style="position:absolute;left:1335px;top:174px;width:1px;height:20px;background:#d4d4d4"></div>
<div style="position:absolute;left:1336px;top:174px;width:1px;height:20px;background:#fff"></div>
<div style="position:absolute;left:1409px;top:174px;width:1px;height:20px;background:#d4d4d4"></div>
<div style="position:absolute;left:1410px;top:174px;width:1px;height:20px;background:#fff"></div>
<div style="position:absolute;left:1466px;top:174px;width:1px;height:20px;background:#d4d4d4"></div>
<div style="position:absolute;left:1467px;top:174px;width:1px;height:20px;background:#fff"></div>
<div style="position:absolute;left:1565px;top:174px;width:1px;height:20px;background:#d4d4d4"></div>
<div style="position:absolute;left:1566px;top:174px;width:1px;height:20px;background:#fff"></div>
<div style="position:absolute;left:886px;top:196px;width:916px;height:16px;background:#fdf1d8"></div>
<div style="position:absolute;left:1129px;top:196px;width:1px;height:16px;background:#fff;opacity:.6"></div>
<div style="position:absolute;left:1252px;top:196px;width:1px;height:16px;background:#fff;opacity:.6"></div>
<div style="position:absolute;left:1335px;top:196px;width:1px;height:16px;background:#fff;opacity:.6"></div>
<div style="position:absolute;left:1409px;top:196px;width:1px;height:16px;background:#fff;opacity:.6"></div>
<div style="position:absolute;left:1466px;top:196px;width:1px;height:16px;background:#fff;opacity:.6"></div>
<div style="position:absolute;left:1565px;top:196px;width:1px;height:16px;background:#fff;opacity:.6"></div>
<div style="position:absolute;left:886px;top:213px;width:916px;height:1px;background:#e3e3e3"></div>
<div style="position:absolute;left:929px;top:196px;width:38px;height:16px;background:#fae3a0"></div>
<div style="position:absolute;left:886px;top:232px;width:916px;height:1px;background:#e3e3e3"></div>
<div style="position:absolute;left:886px;top:251px;width:916px;height:1px;background:#e3e3e3"></div>
<div style="position:absolute;left:886px;top:270px;width:916px;height:1px;background:#e3e3e3"></div>
<div style="position:absolute;left:886px;top:289px;width:916px;height:1px;background:#e3e3e3"></div>
<div style="position:absolute;left:886px;top:308px;width:916px;height:1px;background:#e3e3e3"></div>
<div style="position:absolute;left:886px;top:327px;width:916px;height:1px;background:#e3e3e3"></div>
<div style="position:absolute;left:886px;top:346px;width:916px;height:1px;background:#e3e3e3"></div>
<div style="position:absolute;left:886px;top:365px;width:916px;height:1px;background:#e3e3e3"></div>
<div style="position:absolute;left:886px;top:384px;width:916px;height:1px;background:#e3e3e3"></div>
<div style="position:absolute;left:886px;top:403px;width:916px;height:1px;background:#e3e3e3"></div>
<div style="position:absolute;left:886px;top:422px;width:916px;height:1px;background:#e3e3e3"></div>
<div style="position:absolute;left:886px;top:441px;width:916px;height:1px;background:#e3e3e3"></div>
<div style="position:absolute;left:886px;top:460px;width:916px;height:1px;background:#e3e3e3"></div>
<div style="position:absolute;left:886px;top:479px;width:916px;height:1px;background:#e3e3e3"></div>
<div style="position:absolute;left:886px;top:498px;width:916px;height:1px;background:#e3e3e3"></div>
<div style="position:absolute;left:886px;top:517px;width:916px;height:1px;background:#e3e3e3"></div>
<div style="position:absolute;left:886px;top:536px;width:916px;height:1px;background:#e3e3e3"></div>
<div style="position:absolute;left:886px;top:555px;width:916px;height:1px;background:#e3e3e3"></div>
<div style="position:absolute;left:886px;top:574px;width:916px;height:1px;background:#e3e3e3"></div>
<div style="position:absolute;left:886px;top:593px;width:916px;height:1px;background:#e3e3e3"></div>
<div style="position:absolute;left:886px;top:612px;width:916px;height:1px;background:#e3e3e3"></div>
<div style="position:absolute;left:886px;top:631px;width:916px;height:1px;background:#e3e3e3"></div>
<div style="position:absolute;left:886px;top:650px;width:916px;height:1px;background:#e3e3e3"></div>
<div style="position:absolute;left:886px;top:669px;width:916px;height:1px;background:#e3e3e3"></div>
<div style="position:absolute;left:886px;top:688px;width:916px;height:1px;background:#e3e3e3"></div>
<div style="position:absolute;left:886px;top:707px;width:916px;height:1px;background:#e3e3e3"></div>
<div style="position:absolute;left:886px;top:726px;width:916px;height:1px;background:#e3e3e3"></div>
<div style="position:absolute;left:886px;top:745px;width:916px;height:1px;background:#e3e3e3"></div>
<div style="position:absolute;left:886px;top:764px;width:916px;height:1px;background:#e3e3e3"></div>
<div style="position:absolute;left:886px;top:783px;width:916px;height:1px;background:#e3e3e3"></div>
<div style="position:absolute;left:886px;top:802px;width:916px;height:1px;background:#e3e3e3"></div>
<div style="position:absolute;left:886px;top:821px;width:916px;height:1px;background:#e3e3e3"></div>
<div style="position:absolute;left:886px;top:840px;width:916px;height:1px;background:#e3e3e3"></div>
<svg style="position:absolute;left:0;top:0" width="1811" height="866"><defs><linearGradient id="fbg" x1="0" y1="0" x2="1" y2="0.3"><stop offset="0" stop-color="#f2f9ff"/><stop offset="0.35" stop-color="#a9ccf4"/><stop offset="1" stop-color="#6a9fe6"/></linearGradient><linearGradient id="obg" x1="0" y1="0" x2="1" y2="0.3"><stop offset="0" stop-color="#fff4d8"/><stop offset="0.35" stop-color="#f6c870"/><stop offset="1" stop-color="#eba63c"/></linearGradient></defs><circle cx="17.5" cy="232.5" r="4.3" fill="#fff" stroke="#a8a8a8" stroke-width="1"/><line x1="15.0" y1="232.5" x2="20.0" y2="232.5" stroke="#707070" stroke-width="1.1"/><g transform="translate(30.4,225.2)"><path d="M1 1.2 Q1 0.6 1.8 0.6 L6 0.6 L7 1.8 L12.6 1.8 Q13.6 1.8 13.6 3 L13.6 10.8 Q13.6 11.8 12.6 11.8 L1.8 11.8 Q1 11.8 1 11Z" fill="url(#obg)"/><path d="M1.6 1 L1.6 11" stroke="#d0861a" stroke-width="1.3"/><path d="M1.5 0.9 L6 0.9 L7 2 L13 2" stroke="#d89028" stroke-width="0.9" fill="none"/><path d="M12.8 3.6 L12.8 10.6" stroke="#d0861a" stroke-width="1.6"/><path d="M2 11.5 L12.6 11.5" stroke="#c07a18" stroke-width="0.9"/><text x="2.3" y="10" font-size="9" font-weight="bold" fill="#d08a20" font-family="Liberation Sans">2</text></g><g transform="translate(48,246.5)"><path d="M0.4 0.8 L15.3 2 Q16.3 4.5 15.6 7.6 L1.2 6.2 Q-0.3 3.6 0.4 0.8Z" fill="#3c3e44"/><path d="M1.6 2.4 L9.5 3.1 M10.5 3.6 L14.5 4" stroke="#7c8292" stroke-width="1.1"/></g><circle cx="17.5" cy="270.5" r="4.3" fill="#fff" stroke="#a8a8a8" stroke-width="1"/><line x1="15.0" y1="270.5" x2="20.0" y2="270.5" stroke="#707070" stroke-width="1.1"/><line x1="17.5" y1="268.0" x2="17.5" y2="273.0" stroke="#707070" stroke-width="1.1"/><g transform="translate(30.4,263.2)"><path d="M1 1.2 Q1 0.6 1.8 0.6 L6 0.6 L7 1.8 L12.6 1.8 Q13.6 1.8 13.6 3 L13.6 10.8 Q13.6 11.8 12.6 11.8 L1.8 11.8 Q1 11.8 1 11Z" fill="url(#fbg)"/><path d="M1.6 1 L1.6 11" stroke="#0e50c8" stroke-width="1.3"/><path d="M1.5 0.9 L6 0.9 L7 2 L13 2" stroke="#1a5ad0" stroke-width="0.9" fill="none"/><path d="M12.8 3.6 L12.8 10.6" stroke="#0e50c8" stroke-width="1.6"/><path d="M2 11.5 L12.6 11.5" stroke="#1a4fb8" stroke-width="0.9"/><text x="2.3" y="10" font-size="9" font-weight="bold" fill="#1459d2" font-family="Liberation Sans">6</text></g><circle cx="17.5" cy="289.5" r="4.3" fill="#fff" stroke="#a8a8a8" stroke-width="1"/><line x1="15.0" y1="289.5" x2="20.0" y2="289.5" stroke="#707070" stroke-width="1.1"/><g transform="translate(30.4,282.2)"><path d="M1 1.2 Q1 0.6 1.8 0.6 L6 0.6 L7 1.8 L12.6 1.8 Q13.6 1.8 13.6 3 L13.6 10.8 Q13.6 11.8 12.6 11.8 L1.8 11.8 Q1 11.8 1 11Z" fill="url(#fbg)"/><path d="M1.6 1 L1.6 11" stroke="#0e50c8" stroke-width="1.3"/><path d="M1.5 0.9 L6 0.9 L7 2 L13 2" stroke="#1a5ad0" stroke-width="0.9" fill="none"/><path d="M12.8 3.6 L12.8 10.6" stroke="#0e50c8" stroke-width="1.6"/><path d="M2 11.5 L12.6 11.5" stroke="#1a4fb8" stroke-width="0.9"/><text x="2.3" y="10" font-size="9" font-weight="bold" fill="#1459d2" font-family="Liberation Sans">6</text></g><g transform="translate(48,301.5)"><rect x="0.3" y="0.4" width="15.4" height="10.6" rx="1" fill="#d9d2ca"/><rect x="3.5" y="0.9" width="9.5" height="1.9" fill="#262626"/><rect x="0.3" y="6.6" width="13.5" height="4.4" fill="#3c3c3c"/><rect x="4" y="9" width="6" height="2" fill="#a0a0a0"/><rect x="14.3" y="1" width="1.4" height="10" fill="#6a6a6a"/></g><circle cx="17.5" cy="521.5" r="4.3" fill="#fff" stroke="#a8a8a8" stroke-width="1"/><line x1="15.0" y1="521.5" x2="20.0" y2="521.5" stroke="#707070" stroke-width="1.1"/><line x1="17.5" y1="519.0" x2="17.5" y2="524.0" stroke="#707070" stroke-width="1.1"/><g transform="translate(30.4,514.2)"><path d="M1 1.2 Q1 0.6 1.8 0.6 L6 0.6 L7 1.8 L12.6 1.8 Q13.6 1.8 13.6 3 L13.6 10.8 Q13.6 11.8 12.6 11.8 L1.8 11.8 Q1 11.8 1 11Z" fill="url(#fbg)"/><path d="M1.6 1 L1.6 11" stroke="#0e50c8" stroke-width="1.3"/><path d="M1.5 0.9 L6 0.9 L7 2 L13 2" stroke="#1a5ad0" stroke-width="0.9" fill="none"/><path d="M12.8 3.6 L12.8 10.6" stroke="#0e50c8" stroke-width="1.6"/><path d="M2 11.5 L12.6 11.5" stroke="#1a4fb8" stroke-width="0.9"/><text x="2.3" y="10" font-size="9" font-weight="bold" fill="#1459d2" font-family="Liberation Sans">6</text></g><circle cx="17.5" cy="540.5" r="4.3" fill="#fff" stroke="#a8a8a8" stroke-width="1"/><line x1="15.0" y1="540.5" x2="20.0" y2="540.5" stroke="#707070" stroke-width="1.1"/><line x1="17.5" y1="538.0" x2="17.5" y2="543.0" stroke="#707070" stroke-width="1.1"/><g transform="translate(30.4,533.2)"><path d="M1 1.2 Q1 0.6 1.8 0.6 L6 0.6 L7 1.8 L12.6 1.8 Q13.6 1.8 13.6 3 L13.6 10.8 Q13.6 11.8 12.6 11.8 L1.8 11.8 Q1 11.8 1 11Z" fill="url(#fbg)"/><path d="M1.6 1 L1.6 11" stroke="#0e50c8" stroke-width="1.3"/><path d="M1.5 0.9 L6 0.9 L7 2 L13 2" stroke="#1a5ad0" stroke-width="0.9" fill="none"/><path d="M12.8 3.6 L12.8 10.6" stroke="#0e50c8" stroke-width="1.6"/><path d="M2 11.5 L12.6 11.5" stroke="#1a4fb8" stroke-width="0.9"/><text x="2.3" y="10" font-size="9" font-weight="bold" fill="#1459d2" font-family="Liberation Sans">6</text></g><circle cx="17.5" cy="559.5" r="4.3" fill="#fff" stroke="#a8a8a8" stroke-width="1"/><line x1="15.0" y1="559.5" x2="20.0" y2="559.5" stroke="#707070" stroke-width="1.1"/><line x1="17.5" y1="557.0" x2="17.5" y2="562.0" stroke="#707070" stroke-width="1.1"/><g transform="translate(30.4,552.2)"><path d="M1 1.2 Q1 0.6 1.8 0.6 L6 0.6 L7 1.8 L12.6 1.8 Q13.6 1.8 13.6 3 L13.6 10.8 Q13.6 11.8 12.6 11.8 L1.8 11.8 Q1 11.8 1 11Z" fill="url(#fbg)"/><path d="M1.6 1 L1.6 11" stroke="#0e50c8" stroke-width="1.3"/><path d="M1.5 0.9 L6 0.9 L7 2 L13 2" stroke="#1a5ad0" stroke-width="0.9" fill="none"/><path d="M12.8 3.6 L12.8 10.6" stroke="#0e50c8" stroke-width="1.6"/><path d="M2 11.5 L12.6 11.5" stroke="#1a4fb8" stroke-width="0.9"/><text x="2.3" y="10" font-size="9" font-weight="bold" fill="#1459d2" font-family="Liberation Sans">6</text></g><circle cx="17.5" cy="578.5" r="4.3" fill="#fff" stroke="#a8a8a8" stroke-width="1"/><line x1="15.0" y1="578.5" x2="20.0" y2="578.5" stroke="#707070" stroke-width="1.1"/><line x1="17.5" y1="576.0" x2="17.5" y2="581.0" stroke="#707070" stroke-width="1.1"/><g transform="translate(30.4,571.2)"><path d="M1 1.2 Q1 0.6 1.8 0.6 L6 0.6 L7 1.8 L12.6 1.8 Q13.6 1.8 13.6 3 L13.6 10.8 Q13.6 11.8 12.6 11.8 L1.8 11.8 Q1 11.8 1 11Z" fill="url(#fbg)"/><path d="M1.6 1 L1.6 11" stroke="#0e50c8" stroke-width="1.3"/><path d="M1.5 0.9 L6 0.9 L7 2 L13 2" stroke="#1a5ad0" stroke-width="0.9" fill="none"/><path d="M12.8 3.6 L12.8 10.6" stroke="#0e50c8" stroke-width="1.6"/><path d="M2 11.5 L12.6 11.5" stroke="#1a4fb8" stroke-width="0.9"/><text x="2.3" y="10" font-size="9" font-weight="bold" fill="#1459d2" font-family="Liberation Sans">6</text></g><circle cx="17.5" cy="708.5" r="4.3" fill="#fff" stroke="#a8a8a8" stroke-width="1"/><line x1="15.0" y1="708.5" x2="20.0" y2="708.5" stroke="#707070" stroke-width="1.1"/><line x1="17.5" y1="706.0" x2="17.5" y2="711.0" stroke="#707070" stroke-width="1.1"/><g transform="translate(30.4,701.2)"><path d="M1 1.2 Q1 0.6 1.8 0.6 L6 0.6 L7 1.8 L12.6 1.8 Q13.6 1.8 13.6 3 L13.6 10.8 Q13.6 11.8 12.6 11.8 L1.8 11.8 Q1 11.8 1 11Z" fill="url(#fbg)"/><path d="M1.6 1 L1.6 11" stroke="#0e50c8" stroke-width="1.3"/><path d="M1.5 0.9 L6 0.9 L7 2 L13 2" stroke="#1a5ad0" stroke-width="0.9" fill="none"/><path d="M12.8 3.6 L12.8 10.6" stroke="#0e50c8" stroke-width="1.6"/><path d="M2 11.5 L12.6 11.5" stroke="#1a4fb8" stroke-width="0.9"/><text x="2.3" y="10" font-size="9" font-weight="bold" fill="#1459d2" font-family="Liberation Sans">6</text></g><circle cx="17.5" cy="727.5" r="4.3" fill="#fff" stroke="#a8a8a8" stroke-width="1"/><line x1="15.0" y1="727.5" x2="20.0" y2="727.5" stroke="#707070" stroke-width="1.1"/><line x1="17.5" y1="725.0" x2="17.5" y2="730.0" stroke="#707070" stroke-width="1.1"/><g transform="translate(30.4,720.2)"><path d="M1 1.2 Q1 0.6 1.8 0.6 L6 0.6 L7 1.8 L12.6 1.8 Q13.6 1.8 13.6 3 L13.6 10.8 Q13.6 11.8 12.6 11.8 L1.8 11.8 Q1 11.8 1 11Z" fill="url(#fbg)"/><path d="M1.6 1 L1.6 11" stroke="#0e50c8" stroke-width="1.3"/><path d="M1.5 0.9 L6 0.9 L7 2 L13 2" stroke="#1a5ad0" stroke-width="0.9" fill="none"/><path d="M12.8 3.6 L12.8 10.6" stroke="#0e50c8" stroke-width="1.6"/><path d="M2 11.5 L12.6 11.5" stroke="#1a4fb8" stroke-width="0.9"/><text x="2.3" y="10" font-size="9" font-weight="bold" fill="#1459d2" font-family="Liberation Sans">6</text></g><circle cx="17.5" cy="746.5" r="4.3" fill="#fff" stroke="#a8a8a8" stroke-width="1"/><line x1="15.0" y1="746.5" x2="20.0" y2="746.5" stroke="#707070" stroke-width="1.1"/><line x1="17.5" y1="744.0" x2="17.5" y2="749.0" stroke="#707070" stroke-width="1.1"/><g transform="translate(30.4,739.2)"><path d="M1 1.2 Q1 0.6 1.8 0.6 L6 0.6 L7 1.8 L12.6 1.8 Q13.6 1.8 13.6 3 L13.6 10.8 Q13.6 11.8 12.6 11.8 L1.8 11.8 Q1 11.8 1 11Z" fill="url(#fbg)"/><path d="M1.6 1 L1.6 11" stroke="#0e50c8" stroke-width="1.3"/><path d="M1.5 0.9 L6 0.9 L7 2 L13 2" stroke="#1a5ad0" stroke-width="0.9" fill="none"/><path d="M12.8 3.6 L12.8 10.6" stroke="#0e50c8" stroke-width="1.6"/><path d="M2 11.5 L12.6 11.5" stroke="#1a4fb8" stroke-width="0.9"/><text x="2.3" y="10" font-size="9" font-weight="bold" fill="#1459d2" font-family="Liberation Sans">6</text></g><circle cx="17.5" cy="765.5" r="4.3" fill="#fff" stroke="#a8a8a8" stroke-width="1"/><line x1="15.0" y1="765.5" x2="20.0" y2="765.5" stroke="#707070" stroke-width="1.1"/><line x1="17.5" y1="763.0" x2="17.5" y2="768.0" stroke="#707070" stroke-width="1.1"/><g transform="translate(30.4,758.2)"><path d="M1 1.2 Q1 0.6 1.8 0.6 L6 0.6 L7 1.8 L12.6 1.8 Q13.6 1.8 13.6 3 L13.6 10.8 Q13.6 11.8 12.6 11.8 L1.8 11.8 Q1 11.8 1 11Z" fill="url(#fbg)"/><path d="M1.6 1 L1.6 11" stroke="#0e50c8" stroke-width="1.3"/><path d="M1.5 0.9 L6 0.9 L7 2 L13 2" stroke="#1a5ad0" stroke-width="0.9" fill="none"/><path d="M12.8 3.6 L12.8 10.6" stroke="#0e50c8" stroke-width="1.6"/><path d="M2 11.5 L12.6 11.5" stroke="#1a4fb8" stroke-width="0.9"/><text x="2.3" y="10" font-size="9" font-weight="bold" fill="#1459d2" font-family="Liberation Sans">6</text></g><circle cx="17.5" cy="784.5" r="4.3" fill="#fff" stroke="#a8a8a8" stroke-width="1"/><line x1="15.0" y1="784.5" x2="20.0" y2="784.5" stroke="#707070" stroke-width="1.1"/><line x1="17.5" y1="782.0" x2="17.5" y2="787.0" stroke="#707070" stroke-width="1.1"/><g transform="translate(30.4,777.2)"><path d="M1 1.2 Q1 0.6 1.8 0.6 L6 0.6 L7 1.8 L12.6 1.8 Q13.6 1.8 13.6 3 L13.6 10.8 Q13.6 11.8 12.6 11.8 L1.8 11.8 Q1 11.8 1 11Z" fill="url(#fbg)"/><path d="M1.6 1 L1.6 11" stroke="#0e50c8" stroke-width="1.3"/><path d="M1.5 0.9 L6 0.9 L7 2 L13 2" stroke="#1a5ad0" stroke-width="0.9" fill="none"/><path d="M12.8 3.6 L12.8 10.6" stroke="#0e50c8" stroke-width="1.6"/><path d="M2 11.5 L12.6 11.5" stroke="#1a4fb8" stroke-width="0.9"/><text x="2.3" y="10" font-size="9" font-weight="bold" fill="#1459d2" font-family="Liberation Sans">6</text></g><circle cx="17.5" cy="803.5" r="4.3" fill="#fff" stroke="#a8a8a8" stroke-width="1"/><line x1="15.0" y1="803.5" x2="20.0" y2="803.5" stroke="#707070" stroke-width="1.1"/><line x1="17.5" y1="801.0" x2="17.5" y2="806.0" stroke="#707070" stroke-width="1.1"/><g transform="translate(30.4,796.2)"><path d="M1 1.2 Q1 0.6 1.8 0.6 L6 0.6 L7 1.8 L12.6 1.8 Q13.6 1.8 13.6 3 L13.6 10.8 Q13.6 11.8 12.6 11.8 L1.8 11.8 Q1 11.8 1 11Z" fill="url(#fbg)"/><path d="M1.6 1 L1.6 11" stroke="#0e50c8" stroke-width="1.3"/><path d="M1.5 0.9 L6 0.9 L7 2 L13 2" stroke="#1a5ad0" stroke-width="0.9" fill="none"/><path d="M12.8 3.6 L12.8 10.6" stroke="#0e50c8" stroke-width="1.6"/><path d="M2 11.5 L12.6 11.5" stroke="#1a4fb8" stroke-width="0.9"/><text x="2.3" y="10" font-size="9" font-weight="bold" fill="#1459d2" font-family="Liberation Sans">6</text></g><circle cx="17.5" cy="822.5" r="4.3" fill="#fff" stroke="#a8a8a8" stroke-width="1"/><line x1="15.0" y1="822.5" x2="20.0" y2="822.5" stroke="#707070" stroke-width="1.1"/><line x1="17.5" y1="820.0" x2="17.5" y2="825.0" stroke="#707070" stroke-width="1.1"/><g transform="translate(30.4,815.2)"><path d="M1 1.2 Q1 0.6 1.8 0.6 L6 0.6 L7 1.8 L12.6 1.8 Q13.6 1.8 13.6 3 L13.6 10.8 Q13.6 11.8 12.6 11.8 L1.8 11.8 Q1 11.8 1 11Z" fill="url(#fbg)"/><path d="M1.6 1 L1.6 11" stroke="#0e50c8" stroke-width="1.3"/><path d="M1.5 0.9 L6 0.9 L7 2 L13 2" stroke="#1a5ad0" stroke-width="0.9" fill="none"/><path d="M12.8 3.6 L12.8 10.6" stroke="#0e50c8" stroke-width="1.6"/><path d="M2 11.5 L12.6 11.5" stroke="#1a4fb8" stroke-width="0.9"/><text x="2.3" y="10" font-size="9" font-weight="bold" fill="#1459d2" font-family="Liberation Sans">6</text></g><circle cx="17.5" cy="841.5" r="4.3" fill="#fff" stroke="#a8a8a8" stroke-width="1"/><line x1="15.0" y1="841.5" x2="20.0" y2="841.5" stroke="#707070" stroke-width="1.1"/><line x1="17.5" y1="839.0" x2="17.5" y2="844.0" stroke="#707070" stroke-width="1.1"/><g transform="translate(30.4,834.2)"><path d="M1 1.2 Q1 0.6 1.8 0.6 L6 0.6 L7 1.8 L12.6 1.8 Q13.6 1.8 13.6 3 L13.6 10.8 Q13.6 11.8 12.6 11.8 L1.8 11.8 Q1 11.8 1 11Z" fill="url(#fbg)"/><path d="M1.6 1 L1.6 11" stroke="#0e50c8" stroke-width="1.3"/><path d="M1.5 0.9 L6 0.9 L7 2 L13 2" stroke="#1a5ad0" stroke-width="0.9" fill="none"/><path d="M12.8 3.6 L12.8 10.6" stroke="#0e50c8" stroke-width="1.6"/><path d="M2 11.5 L12.6 11.5" stroke="#1a4fb8" stroke-width="0.9"/><text x="2.3" y="10" font-size="9" font-weight="bold" fill="#1459d2" font-family="Liberation Sans">6</text></g><g transform="translate(910.4,197.5)"><path d="M0.5 2.5 Q0.5 0.5 2.5 0.5 L6 0.5 L7.5 2 L12 2 Q13.5 2 13.5 3.5 L13.5 10 Q13.5 11.5 12 11.5 L2 11.5 Q0.5 11.5 0.5 10 Z" fill="#f4d67e" stroke="#d3a649" stroke-width="1"/><rect x="1.5" y="3" width="11" height="3" fill="#fbeaa8"/></g><circle cx="897.3" cy="223.5" r="4.3" fill="#fff" stroke="#a8a8a8" stroke-width="1"/><line x1="894.8" y1="223.5" x2="899.8" y2="223.5" stroke="#707070" stroke-width="1.1"/><line x1="897.3" y1="221.0" x2="897.3" y2="226.0" stroke="#707070" stroke-width="1.1"/><g transform="translate(910.4,216.2)"><path d="M1 1.2 Q1 0.6 1.8 0.6 L6 0.6 L7 1.8 L12.6 1.8 Q13.6 1.8 13.6 3 L13.6 10.8 Q13.6 11.8 12.6 11.8 L1.8 11.8 Q1 11.8 1 11Z" fill="url(#fbg)"/><path d="M1.6 1 L1.6 11" stroke="#0e50c8" stroke-width="1.3"/><path d="M1.5 0.9 L6 0.9 L7 2 L13 2" stroke="#1a5ad0" stroke-width="0.9" fill="none"/><path d="M12.8 3.6 L12.8 10.6" stroke="#0e50c8" stroke-width="1.6"/><path d="M2 11.5 L12.6 11.5" stroke="#1a4fb8" stroke-width="0.9"/><text x="2.3" y="10" font-size="9" font-weight="bold" fill="#1459d2" font-family="Liberation Sans">6</text></g><circle cx="897.3" cy="242.5" r="4.3" fill="#fff" stroke="#a8a8a8" stroke-width="1"/><line x1="894.8" y1="242.5" x2="899.8" y2="242.5" stroke="#707070" stroke-width="1.1"/><line x1="897.3" y1="240.0" x2="897.3" y2="245.0" stroke="#707070" stroke-width="1.1"/><g transform="translate(910.4,235.2)"><path d="M1 1.2 Q1 0.6 1.8 0.6 L6 0.6 L7 1.8 L12.6 1.8 Q13.6 1.8 13.6 3 L13.6 10.8 Q13.6 11.8 12.6 11.8 L1.8 11.8 Q1 11.8 1 11Z" fill="url(#fbg)"/><path d="M1.6 1 L1.6 11" stroke="#0e50c8" stroke-width="1.3"/><path d="M1.5 0.9 L6 0.9 L7 2 L13 2" stroke="#1a5ad0" stroke-width="0.9" fill="none"/><path d="M12.8 3.6 L12.8 10.6" stroke="#0e50c8" stroke-width="1.6"/><path d="M2 11.5 L12.6 11.5" stroke="#1a4fb8" stroke-width="0.9"/><text x="2.3" y="10" font-size="9" font-weight="bold" fill="#1459d2" font-family="Liberation Sans">6</text></g><circle cx="897.3" cy="261.5" r="4.3" fill="#fff" stroke="#a8a8a8" stroke-width="1"/><line x1="894.8" y1="261.5" x2="899.8" y2="261.5" stroke="#707070" stroke-width="1.1"/><line x1="897.3" y1="259.0" x2="897.3" y2="264.0" stroke="#707070" stroke-width="1.1"/><g transform="translate(910.4,254.2)"><path d="M1 1.2 Q1 0.6 1.8 0.6 L6 0.6 L7 1.8 L12.6 1.8 Q13.6 1.8 13.6 3 L13.6 10.8 Q13.6 11.8 12.6 11.8 L1.8 11.8 Q1 11.8 1 11Z" fill="url(#fbg)"/><path d="M1.6 1 L1.6 11" stroke="#0e50c8" stroke-width="1.3"/><path d="M1.5 0.9 L6 0.9 L7 2 L13 2" stroke="#1a5ad0" stroke-width="0.9" fill="none"/><path d="M12.8 3.6 L12.8 10.6" stroke="#0e50c8" stroke-width="1.6"/><path d="M2 11.5 L12.6 11.5" stroke="#1a4fb8" stroke-width="0.9"/><text x="2.3" y="10" font-size="9" font-weight="bold" fill="#1459d2" font-family="Liberation Sans">6</text></g><circle cx="897.3" cy="280.5" r="4.3" fill="#fff" stroke="#a8a8a8" stroke-width="1"/><line x1="894.8" y1="280.5" x2="899.8" y2="280.5" stroke="#707070" stroke-width="1.1"/><line x1="897.3" y1="278.0" x2="897.3" y2="283.0" stroke="#707070" stroke-width="1.1"/><g transform="translate(910.4,273.2)"><path d="M1 1.2 Q1 0.6 1.8 0.6 L6 0.6 L7 1.8 L12.6 1.8 Q13.6 1.8 13.6 3 L13.6 10.8 Q13.6 11.8 12.6 11.8 L1.8 11.8 Q1 11.8 1 11Z" fill="url(#fbg)"/><path d="M1.6 1 L1.6 11" stroke="#0e50c8" stroke-width="1.3"/><path d="M1.5 0.9 L6 0.9 L7 2 L13 2" stroke="#1a5ad0" stroke-width="0.9" fill="none"/><path d="M12.8 3.6 L12.8 10.6" stroke="#0e50c8" stroke-width="1.6"/><path d="M2 11.5 L12.6 11.5" stroke="#1a4fb8" stroke-width="0.9"/><text x="2.3" y="10" font-size="9" font-weight="bold" fill="#1459d2" font-family="Liberation Sans">6</text></g><circle cx="897.3" cy="299.5" r="4.3" fill="#fff" stroke="#a8a8a8" stroke-width="1"/><line x1="894.8" y1="299.5" x2="899.8" y2="299.5" stroke="#707070" stroke-width="1.1"/><line x1="897.3" y1="297.0" x2="897.3" y2="302.0" stroke="#707070" stroke-width="1.1"/><g transform="translate(910.4,292.2)"><path d="M1 1.2 Q1 0.6 1.8 0.6 L6 0.6 L7 1.8 L12.6 1.8 Q13.6 1.8 13.6 3 L13.6 10.8 Q13.6 11.8 12.6 11.8 L1.8 11.8 Q1 11.8 1 11Z" fill="url(#fbg)"/><path d="M1.6 1 L1.6 11" stroke="#0e50c8" stroke-width="1.3"/><path d="M1.5 0.9 L6 0.9 L7 2 L13 2" stroke="#1a5ad0" stroke-width="0.9" fill="none"/><path d="M12.8 3.6 L12.8 10.6" stroke="#0e50c8" stroke-width="1.6"/><path d="M2 11.5 L12.6 11.5" stroke="#1a4fb8" stroke-width="0.9"/><text x="2.3" y="10" font-size="9" font-weight="bold" fill="#1459d2" font-family="Liberation Sans">6</text></g><circle cx="897.3" cy="318.5" r="4.3" fill="#fff" stroke="#a8a8a8" stroke-width="1"/><line x1="894.8" y1="318.5" x2="899.8" y2="318.5" stroke="#707070" stroke-width="1.1"/><line x1="897.3" y1="316.0" x2="897.3" y2="321.0" stroke="#707070" stroke-width="1.1"/><g transform="translate(910.4,311.2)"><path d="M1 1.2 Q1 0.6 1.8 0.6 L6 0.6 L7 1.8 L12.6 1.8 Q13.6 1.8 13.6 3 L13.6 10.8 Q13.6 11.8 12.6 11.8 L1.8 11.8 Q1 11.8 1 11Z" fill="url(#fbg)"/><path d="M1.6 1 L1.6 11" stroke="#0e50c8" stroke-width="1.3"/><path d="M1.5 0.9 L6 0.9 L7 2 L13 2" stroke="#1a5ad0" stroke-width="0.9" fill="none"/><path d="M12.8 3.6 L12.8 10.6" stroke="#0e50c8" stroke-width="1.6"/><path d="M2 11.5 L12.6 11.5" stroke="#1a4fb8" stroke-width="0.9"/><text x="2.3" y="10" font-size="9" font-weight="bold" fill="#1459d2" font-family="Liberation Sans">6</text></g><circle cx="897.3" cy="337.5" r="4.3" fill="#fff" stroke="#a8a8a8" stroke-width="1"/><line x1="894.8" y1="337.5" x2="899.8" y2="337.5" stroke="#707070" stroke-width="1.1"/><line x1="897.3" y1="335.0" x2="897.3" y2="340.0" stroke="#707070" stroke-width="1.1"/><g transform="translate(910.4,330.2)"><path d="M1 1.2 Q1 0.6 1.8 0.6 L6 0.6 L7 1.8 L12.6 1.8 Q13.6 1.8 13.6 3 L13.6 10.8 Q13.6 11.8 12.6 11.8 L1.8 11.8 Q1 11.8 1 11Z" fill="url(#fbg)"/><path d="M1.6 1 L1.6 11" stroke="#0e50c8" stroke-width="1.3"/><path d="M1.5 0.9 L6 0.9 L7 2 L13 2" stroke="#1a5ad0" stroke-width="0.9" fill="none"/><path d="M12.8 3.6 L12.8 10.6" stroke="#0e50c8" stroke-width="1.6"/><path d="M2 11.5 L12.6 11.5" stroke="#1a4fb8" stroke-width="0.9"/><text x="2.3" y="10" font-size="9" font-weight="bold" fill="#1459d2" font-family="Liberation Sans">6</text></g><circle cx="897.3" cy="356.5" r="4.3" fill="#fff" stroke="#a8a8a8" stroke-width="1"/><line x1="894.8" y1="356.5" x2="899.8" y2="356.5" stroke="#707070" stroke-width="1.1"/><line x1="897.3" y1="354.0" x2="897.3" y2="359.0" stroke="#707070" stroke-width="1.1"/><g transform="translate(910.4,349.2)"><path d="M1 1.2 Q1 0.6 1.8 0.6 L6 0.6 L7 1.8 L12.6 1.8 Q13.6 1.8 13.6 3 L13.6 10.8 Q13.6 11.8 12.6 11.8 L1.8 11.8 Q1 11.8 1 11Z" fill="url(#fbg)"/><path d="M1.6 1 L1.6 11" stroke="#0e50c8" stroke-width="1.3"/><path d="M1.5 0.9 L6 0.9 L7 2 L13 2" stroke="#1a5ad0" stroke-width="0.9" fill="none"/><path d="M12.8 3.6 L12.8 10.6" stroke="#0e50c8" stroke-width="1.6"/><path d="M2 11.5 L12.6 11.5" stroke="#1a4fb8" stroke-width="0.9"/><text x="2.3" y="10" font-size="9" font-weight="bold" fill="#1459d2" font-family="Liberation Sans">6</text></g><circle cx="897.3" cy="375.5" r="4.3" fill="#fff" stroke="#a8a8a8" stroke-width="1"/><line x1="894.8" y1="375.5" x2="899.8" y2="375.5" stroke="#707070" stroke-width="1.1"/><line x1="897.3" y1="373.0" x2="897.3" y2="378.0" stroke="#707070" stroke-width="1.1"/><g transform="translate(910.4,368.2)"><path d="M1 1.2 Q1 0.6 1.8 0.6 L6 0.6 L7 1.8 L12.6 1.8 Q13.6 1.8 13.6 3 L13.6 10.8 Q13.6 11.8 12.6 11.8 L1.8 11.8 Q1 11.8 1 11Z" fill="url(#fbg)"/><path d="M1.6 1 L1.6 11" stroke="#0e50c8" stroke-width="1.3"/><path d="M1.5 0.9 L6 0.9 L7 2 L13 2" stroke="#1a5ad0" stroke-width="0.9" fill="none"/><path d="M12.8 3.6 L12.8 10.6" stroke="#0e50c8" stroke-width="1.6"/><path d="M2 11.5 L12.6 11.5" stroke="#1a4fb8" stroke-width="0.9"/><text x="2.3" y="10" font-size="9" font-weight="bold" fill="#1459d2" font-family="Liberation Sans">6</text></g><circle cx="897.3" cy="394.5" r="4.3" fill="#fff" stroke="#a8a8a8" stroke-width="1"/><line x1="894.8" y1="394.5" x2="899.8" y2="394.5" stroke="#707070" stroke-width="1.1"/><line x1="897.3" y1="392.0" x2="897.3" y2="397.0" stroke="#707070" stroke-width="1.1"/><g transform="translate(910.4,387.2)"><path d="M1 1.2 Q1 0.6 1.8 0.6 L6 0.6 L7 1.8 L12.6 1.8 Q13.6 1.8 13.6 3 L13.6 10.8 Q13.6 11.8 12.6 11.8 L1.8 11.8 Q1 11.8 1 11Z" fill="url(#fbg)"/><path d="M1.6 1 L1.6 11" stroke="#0e50c8" stroke-width="1.3"/><path d="M1.5 0.9 L6 0.9 L7 2 L13 2" stroke="#1a5ad0" stroke-width="0.9" fill="none"/><path d="M12.8 3.6 L12.8 10.6" stroke="#0e50c8" stroke-width="1.6"/><path d="M2 11.5 L12.6 11.5" stroke="#1a4fb8" stroke-width="0.9"/><text x="2.3" y="10" font-size="9" font-weight="bold" fill="#1459d2" font-family="Liberation Sans">6</text></g><circle cx="897.3" cy="413.5" r="4.3" fill="#fff" stroke="#a8a8a8" stroke-width="1"/><line x1="894.8" y1="413.5" x2="899.8" y2="413.5" stroke="#707070" stroke-width="1.1"/><line x1="897.3" y1="411.0" x2="897.3" y2="416.0" stroke="#707070" stroke-width="1.1"/><g transform="translate(910.4,406.2)"><path d="M1 1.2 Q1 0.6 1.8 0.6 L6 0.6 L7 1.8 L12.6 1.8 Q13.6 1.8 13.6 3 L13.6 10.8 Q13.6 11.8 12.6 11.8 L1.8 11.8 Q1 11.8 1 11Z" fill="url(#fbg)"/><path d="M1.6 1 L1.6 11" stroke="#0e50c8" stroke-width="1.3"/><path d="M1.5 0.9 L6 0.9 L7 2 L13 2" stroke="#1a5ad0" stroke-width="0.9" fill="none"/><path d="M12.8 3.6 L12.8 10.6" stroke="#0e50c8" stroke-width="1.6"/><path d="M2 11.5 L12.6 11.5" stroke="#1a4fb8" stroke-width="0.9"/><text x="2.3" y="10" font-size="9" font-weight="bold" fill="#1459d2" font-family="Liberation Sans">6</text></g><circle cx="897.3" cy="432.5" r="4.3" fill="#fff" stroke="#a8a8a8" stroke-width="1"/><line x1="894.8" y1="432.5" x2="899.8" y2="432.5" stroke="#707070" stroke-width="1.1"/><line x1="897.3" y1="430.0" x2="897.3" y2="435.0" stroke="#707070" stroke-width="1.1"/><g transform="translate(910.4,425.2)"><path d="M1 1.2 Q1 0.6 1.8 0.6 L6 0.6 L7 1.8 L12.6 1.8 Q13.6 1.8 13.6 3 L13.6 10.8 Q13.6 11.8 12.6 11.8 L1.8 11.8 Q1 11.8 1 11Z" fill="url(#fbg)"/><path d="M1.6 1 L1.6 11" stroke="#0e50c8" stroke-width="1.3"/><path d="M1.5 0.9 L6 0.9 L7 2 L13 2" stroke="#1a5ad0" stroke-width="0.9" fill="none"/><path d="M12.8 3.6 L12.8 10.6" stroke="#0e50c8" stroke-width="1.6"/><path d="M2 11.5 L12.6 11.5" stroke="#1a4fb8" stroke-width="0.9"/><text x="2.3" y="10" font-size="9" font-weight="bold" fill="#1459d2" font-family="Liberation Sans">6</text></g><circle cx="897.3" cy="451.5" r="4.3" fill="#fff" stroke="#a8a8a8" stroke-width="1"/><line x1="894.8" y1="451.5" x2="899.8" y2="451.5" stroke="#707070" stroke-width="1.1"/><line x1="897.3" y1="449.0" x2="897.3" y2="454.0" stroke="#707070" stroke-width="1.1"/><g transform="translate(910.4,444.2)"><path d="M1 1.2 Q1 0.6 1.8 0.6 L6 0.6 L7 1.8 L12.6 1.8 Q13.6 1.8 13.6 3 L13.6 10.8 Q13.6 11.8 12.6 11.8 L1.8 11.8 Q1 11.8 1 11Z" fill="url(#fbg)"/><path d="M1.6 1 L1.6 11" stroke="#0e50c8" stroke-width="1.3"/><path d="M1.5 0.9 L6 0.9 L7 2 L13 2" stroke="#1a5ad0" stroke-width="0.9" fill="none"/><path d="M12.8 3.6 L12.8 10.6" stroke="#0e50c8" stroke-width="1.6"/><path d="M2 11.5 L12.6 11.5" stroke="#1a4fb8" stroke-width="0.9"/><text x="2.3" y="10" font-size="9" font-weight="bold" fill="#1459d2" font-family="Liberation Sans">6</text></g><circle cx="897.3" cy="470.5" r="4.3" fill="#fff" stroke="#a8a8a8" stroke-width="1"/><line x1="894.8" y1="470.5" x2="899.8" y2="470.5" stroke="#707070" stroke-width="1.1"/><line x1="897.3" y1="468.0" x2="897.3" y2="473.0" stroke="#707070" stroke-width="1.1"/><g transform="translate(910.4,463.2)"><path d="M1 1.2 Q1 0.6 1.8 0.6 L6 0.6 L7 1.8 L12.6 1.8 Q13.6 1.8 13.6 3 L13.6 10.8 Q13.6 11.8 12.6 11.8 L1.8 11.8 Q1 11.8 1 11Z" fill="url(#fbg)"/><path d="M1.6 1 L1.6 11" stroke="#0e50c8" stroke-width="1.3"/><path d="M1.5 0.9 L6 0.9 L7 2 L13 2" stroke="#1a5ad0" stroke-width="0.9" fill="none"/><path d="M12.8 3.6 L12.8 10.6" stroke="#0e50c8" stroke-width="1.6"/><path d="M2 11.5 L12.6 11.5" stroke="#1a4fb8" stroke-width="0.9"/><text x="2.3" y="10" font-size="9" font-weight="bold" fill="#1459d2" font-family="Liberation Sans">6</text></g><circle cx="897.3" cy="489.5" r="4.3" fill="#fff" stroke="#a8a8a8" stroke-width="1"/><line x1="894.8" y1="489.5" x2="899.8" y2="489.5" stroke="#707070" stroke-width="1.1"/><line x1="897.3" y1="487.0" x2="897.3" y2="492.0" stroke="#707070" stroke-width="1.1"/><g transform="translate(910.4,482.2)"><path d="M1 1.2 Q1 0.6 1.8 0.6 L6 0.6 L7 1.8 L12.6 1.8 Q13.6 1.8 13.6 3 L13.6 10.8 Q13.6 11.8 12.6 11.8 L1.8 11.8 Q1 11.8 1 11Z" fill="url(#fbg)"/><path d="M1.6 1 L1.6 11" stroke="#0e50c8" stroke-width="1.3"/><path d="M1.5 0.9 L6 0.9 L7 2 L13 2" stroke="#1a5ad0" stroke-width="0.9" fill="none"/><path d="M12.8 3.6 L12.8 10.6" stroke="#0e50c8" stroke-width="1.6"/><path d="M2 11.5 L12.6 11.5" stroke="#1a4fb8" stroke-width="0.9"/><text x="2.3" y="10" font-size="9" font-weight="bold" fill="#1459d2" font-family="Liberation Sans">6</text></g><circle cx="897.3" cy="508.5" r="4.3" fill="#fff" stroke="#a8a8a8" stroke-width="1"/><line x1="894.8" y1="508.5" x2="899.8" y2="508.5" stroke="#707070" stroke-width="1.1"/><line x1="897.3" y1="506.0" x2="897.3" y2="511.0" stroke="#707070" stroke-width="1.1"/><g transform="translate(910.4,501.2)"><path d="M1 1.2 Q1 0.6 1.8 0.6 L6 0.6 L7 1.8 L12.6 1.8 Q13.6 1.8 13.6 3 L13.6 10.8 Q13.6 11.8 12.6 11.8 L1.8 11.8 Q1 11.8 1 11Z" fill="url(#fbg)"/><path d="M1.6 1 L1.6 11" stroke="#0e50c8" stroke-width="1.3"/><path d="M1.5 0.9 L6 0.9 L7 2 L13 2" stroke="#1a5ad0" stroke-width="0.9" fill="none"/><path d="M12.8 3.6 L12.8 10.6" stroke="#0e50c8" stroke-width="1.6"/><path d="M2 11.5 L12.6 11.5" stroke="#1a4fb8" stroke-width="0.9"/><text x="2.3" y="10" font-size="9" font-weight="bold" fill="#1459d2" font-family="Liberation Sans">6</text></g><circle cx="897.3" cy="527.5" r="4.3" fill="#fff" stroke="#a8a8a8" stroke-width="1"/><line x1="894.8" y1="527.5" x2="899.8" y2="527.5" stroke="#707070" stroke-width="1.1"/><line x1="897.3" y1="525.0" x2="897.3" y2="530.0" stroke="#707070" stroke-width="1.1"/><g transform="translate(910.4,520.2)"><path d="M1 1.2 Q1 0.6 1.8 0.6 L6 0.6 L7 1.8 L12.6 1.8 Q13.6 1.8 13.6 3 L13.6 10.8 Q13.6 11.8 12.6 11.8 L1.8 11.8 Q1 11.8 1 11Z" fill="url(#fbg)"/><path d="M1.6 1 L1.6 11" stroke="#0e50c8" stroke-width="1.3"/><path d="M1.5 0.9 L6 0.9 L7 2 L13 2" stroke="#1a5ad0" stroke-width="0.9" fill="none"/><path d="M12.8 3.6 L12.8 10.6" stroke="#0e50c8" stroke-width="1.6"/><path d="M2 11.5 L12.6 11.5" stroke="#1a4fb8" stroke-width="0.9"/><text x="2.3" y="10" font-size="9" font-weight="bold" fill="#1459d2" font-family="Liberation Sans">6</text></g><circle cx="897.3" cy="546.5" r="4.3" fill="#fff" stroke="#a8a8a8" stroke-width="1"/><line x1="894.8" y1="546.5" x2="899.8" y2="546.5" stroke="#707070" stroke-width="1.1"/><line x1="897.3" y1="544.0" x2="897.3" y2="549.0" stroke="#707070" stroke-width="1.1"/><g transform="translate(910.4,539.2)"><path d="M1 1.2 Q1 0.6 1.8 0.6 L6 0.6 L7 1.8 L12.6 1.8 Q13.6 1.8 13.6 3 L13.6 10.8 Q13.6 11.8 12.6 11.8 L1.8 11.8 Q1 11.8 1 11Z" fill="url(#fbg)"/><path d="M1.6 1 L1.6 11" stroke="#0e50c8" stroke-width="1.3"/><path d="M1.5 0.9 L6 0.9 L7 2 L13 2" stroke="#1a5ad0" stroke-width="0.9" fill="none"/><path d="M12.8 3.6 L12.8 10.6" stroke="#0e50c8" stroke-width="1.6"/><path d="M2 11.5 L12.6 11.5" stroke="#1a4fb8" stroke-width="0.9"/><text x="2.3" y="10" font-size="9" font-weight="bold" fill="#1459d2" font-family="Liberation Sans">6</text></g><circle cx="897.3" cy="565.5" r="4.3" fill="#fff" stroke="#a8a8a8" stroke-width="1"/><line x1="894.8" y1="565.5" x2="899.8" y2="565.5" stroke="#707070" stroke-width="1.1"/><line x1="897.3" y1="563.0" x2="897.3" y2="568.0" stroke="#707070" stroke-width="1.1"/><g transform="translate(910.4,558.2)"><path d="M1 1.2 Q1 0.6 1.8 0.6 L6 0.6 L7 1.8 L12.6 1.8 Q13.6 1.8 13.6 3 L13.6 10.8 Q13.6 11.8 12.6 11.8 L1.8 11.8 Q1 11.8 1 11Z" fill="url(#fbg)"/><path d="M1.6 1 L1.6 11" stroke="#0e50c8" stroke-width="1.3"/><path d="M1.5 0.9 L6 0.9 L7 2 L13 2" stroke="#1a5ad0" stroke-width="0.9" fill="none"/><path d="M12.8 3.6 L12.8 10.6" stroke="#0e50c8" stroke-width="1.6"/><path d="M2 11.5 L12.6 11.5" stroke="#1a4fb8" stroke-width="0.9"/><text x="2.3" y="10" font-size="9" font-weight="bold" fill="#1459d2" font-family="Liberation Sans">6</text></g><circle cx="897.3" cy="584.5" r="4.3" fill="#fff" stroke="#a8a8a8" stroke-width="1"/><line x1="894.8" y1="584.5" x2="899.8" y2="584.5" stroke="#707070" stroke-width="1.1"/><line x1="897.3" y1="582.0" x2="897.3" y2="587.0" stroke="#707070" stroke-width="1.1"/><g transform="translate(910.4,577.2)"><path d="M1 1.2 Q1 0.6 1.8 0.6 L6 0.6 L7 1.8 L12.6 1.8 Q13.6 1.8 13.6 3 L13.6 10.8 Q13.6 11.8 12.6 11.8 L1.8 11.8 Q1 11.8 1 11Z" fill="url(#fbg)"/><path d="M1.6 1 L1.6 11" stroke="#0e50c8" stroke-width="1.3"/><path d="M1.5 0.9 L6 0.9 L7 2 L13 2" stroke="#1a5ad0" stroke-width="0.9" fill="none"/><path d="M12.8 3.6 L12.8 10.6" stroke="#0e50c8" stroke-width="1.6"/><path d="M2 11.5 L12.6 11.5" stroke="#1a4fb8" stroke-width="0.9"/><text x="2.3" y="10" font-size="9" font-weight="bold" fill="#1459d2" font-family="Liberation Sans">6</text></g><circle cx="897.3" cy="603.5" r="4.3" fill="#fff" stroke="#a8a8a8" stroke-width="1"/><line x1="894.8" y1="603.5" x2="899.8" y2="603.5" stroke="#707070" stroke-width="1.1"/><line x1="897.3" y1="601.0" x2="897.3" y2="606.0" stroke="#707070" stroke-width="1.1"/><g transform="translate(910.4,596.2)"><path d="M1 1.2 Q1 0.6 1.8 0.6 L6 0.6 L7 1.8 L12.6 1.8 Q13.6 1.8 13.6 3 L13.6 10.8 Q13.6 11.8 12.6 11.8 L1.8 11.8 Q1 11.8 1 11Z" fill="url(#fbg)"/><path d="M1.6 1 L1.6 11" stroke="#0e50c8" stroke-width="1.3"/><path d="M1.5 0.9 L6 0.9 L7 2 L13 2" stroke="#1a5ad0" stroke-width="0.9" fill="none"/><path d="M12.8 3.6 L12.8 10.6" stroke="#0e50c8" stroke-width="1.6"/><path d="M2 11.5 L12.6 11.5" stroke="#1a4fb8" stroke-width="0.9"/><text x="2.3" y="10" font-size="9" font-weight="bold" fill="#1459d2" font-family="Liberation Sans">6</text></g><circle cx="897.3" cy="622.5" r="4.3" fill="#fff" stroke="#a8a8a8" stroke-width="1"/><line x1="894.8" y1="622.5" x2="899.8" y2="622.5" stroke="#707070" stroke-width="1.1"/><line x1="897.3" y1="620.0" x2="897.3" y2="625.0" stroke="#707070" stroke-width="1.1"/><g transform="translate(910.4,615.2)"><path d="M1 1.2 Q1 0.6 1.8 0.6 L6 0.6 L7 1.8 L12.6 1.8 Q13.6 1.8 13.6 3 L13.6 10.8 Q13.6 11.8 12.6 11.8 L1.8 11.8 Q1 11.8 1 11Z" fill="url(#fbg)"/><path d="M1.6 1 L1.6 11" stroke="#0e50c8" stroke-width="1.3"/><path d="M1.5 0.9 L6 0.9 L7 2 L13 2" stroke="#1a5ad0" stroke-width="0.9" fill="none"/><path d="M12.8 3.6 L12.8 10.6" stroke="#0e50c8" stroke-width="1.6"/><path d="M2 11.5 L12.6 11.5" stroke="#1a4fb8" stroke-width="0.9"/><text x="2.3" y="10" font-size="9" font-weight="bold" fill="#1459d2" font-family="Liberation Sans">6</text></g><circle cx="897.3" cy="641.5" r="4.3" fill="#fff" stroke="#a8a8a8" stroke-width="1"/><line x1="894.8" y1="641.5" x2="899.8" y2="641.5" stroke="#707070" stroke-width="1.1"/><line x1="897.3" y1="639.0" x2="897.3" y2="644.0" stroke="#707070" stroke-width="1.1"/><g transform="translate(910.4,634.2)"><path d="M1 1.2 Q1 0.6 1.8 0.6 L6 0.6 L7 1.8 L12.6 1.8 Q13.6 1.8 13.6 3 L13.6 10.8 Q13.6 11.8 12.6 11.8 L1.8 11.8 Q1 11.8 1 11Z" fill="url(#fbg)"/><path d="M1.6 1 L1.6 11" stroke="#0e50c8" stroke-width="1.3"/><path d="M1.5 0.9 L6 0.9 L7 2 L13 2" stroke="#1a5ad0" stroke-width="0.9" fill="none"/><path d="M12.8 3.6 L12.8 10.6" stroke="#0e50c8" stroke-width="1.6"/><path d="M2 11.5 L12.6 11.5" stroke="#1a4fb8" stroke-width="0.9"/><text x="2.3" y="10" font-size="9" font-weight="bold" fill="#1459d2" font-family="Liberation Sans">6</text></g><circle cx="897.3" cy="660.5" r="4.3" fill="#fff" stroke="#a8a8a8" stroke-width="1"/><line x1="894.8" y1="660.5" x2="899.8" y2="660.5" stroke="#707070" stroke-width="1.1"/><line x1="897.3" y1="658.0" x2="897.3" y2="663.0" stroke="#707070" stroke-width="1.1"/><g transform="translate(910.4,653.2)"><path d="M1 1.2 Q1 0.6 1.8 0.6 L6 0.6 L7 1.8 L12.6 1.8 Q13.6 1.8 13.6 3 L13.6 10.8 Q13.6 11.8 12.6 11.8 L1.8 11.8 Q1 11.8 1 11Z" fill="url(#fbg)"/><path d="M1.6 1 L1.6 11" stroke="#0e50c8" stroke-width="1.3"/><path d="M1.5 0.9 L6 0.9 L7 2 L13 2" stroke="#1a5ad0" stroke-width="0.9" fill="none"/><path d="M12.8 3.6 L12.8 10.6" stroke="#0e50c8" stroke-width="1.6"/><path d="M2 11.5 L12.6 11.5" stroke="#1a4fb8" stroke-width="0.9"/><text x="2.3" y="10" font-size="9" font-weight="bold" fill="#1459d2" font-family="Liberation Sans">6</text></g><circle cx="897.3" cy="679.5" r="4.3" fill="#fff" stroke="#a8a8a8" stroke-width="1"/><line x1="894.8" y1="679.5" x2="899.8" y2="679.5" stroke="#707070" stroke-width="1.1"/><line x1="897.3" y1="677.0" x2="897.3" y2="682.0" stroke="#707070" stroke-width="1.1"/><g transform="translate(910.4,672.2)"><path d="M1 1.2 Q1 0.6 1.8 0.6 L6 0.6 L7 1.8 L12.6 1.8 Q13.6 1.8 13.6 3 L13.6 10.8 Q13.6 11.8 12.6 11.8 L1.8 11.8 Q1 11.8 1 11Z" fill="url(#fbg)"/><path d="M1.6 1 L1.6 11" stroke="#0e50c8" stroke-width="1.3"/><path d="M1.5 0.9 L6 0.9 L7 2 L13 2" stroke="#1a5ad0" stroke-width="0.9" fill="none"/><path d="M12.8 3.6 L12.8 10.6" stroke="#0e50c8" stroke-width="1.6"/><path d="M2 11.5 L12.6 11.5" stroke="#1a4fb8" stroke-width="0.9"/><text x="2.3" y="10" font-size="9" font-weight="bold" fill="#1459d2" font-family="Liberation Sans">6</text></g><circle cx="897.3" cy="698.5" r="4.3" fill="#fff" stroke="#a8a8a8" stroke-width="1"/><line x1="894.8" y1="698.5" x2="899.8" y2="698.5" stroke="#707070" stroke-width="1.1"/><line x1="897.3" y1="696.0" x2="897.3" y2="701.0" stroke="#707070" stroke-width="1.1"/><g transform="translate(910.4,691.2)"><path d="M1 1.2 Q1 0.6 1.8 0.6 L6 0.6 L7 1.8 L12.6 1.8 Q13.6 1.8 13.6 3 L13.6 10.8 Q13.6 11.8 12.6 11.8 L1.8 11.8 Q1 11.8 1 11Z" fill="url(#fbg)"/><path d="M1.6 1 L1.6 11" stroke="#0e50c8" stroke-width="1.3"/><path d="M1.5 0.9 L6 0.9 L7 2 L13 2" stroke="#1a5ad0" stroke-width="0.9" fill="none"/><path d="M12.8 3.6 L12.8 10.6" stroke="#0e50c8" stroke-width="1.6"/><path d="M2 11.5 L12.6 11.5" stroke="#1a4fb8" stroke-width="0.9"/><text x="2.3" y="10" font-size="9" font-weight="bold" fill="#1459d2" font-family="Liberation Sans">6</text></g><circle cx="897.3" cy="717.5" r="4.3" fill="#fff" stroke="#a8a8a8" stroke-width="1"/><line x1="894.8" y1="717.5" x2="899.8" y2="717.5" stroke="#707070" stroke-width="1.1"/><line x1="897.3" y1="715.0" x2="897.3" y2="720.0" stroke="#707070" stroke-width="1.1"/><g transform="translate(910.4,710.2)"><path d="M1 1.2 Q1 0.6 1.8 0.6 L6 0.6 L7 1.8 L12.6 1.8 Q13.6 1.8 13.6 3 L13.6 10.8 Q13.6 11.8 12.6 11.8 L1.8 11.8 Q1 11.8 1 11Z" fill="url(#fbg)"/><path d="M1.6 1 L1.6 11" stroke="#0e50c8" stroke-width="1.3"/><path d="M1.5 0.9 L6 0.9 L7 2 L13 2" stroke="#1a5ad0" stroke-width="0.9" fill="none"/><path d="M12.8 3.6 L12.8 10.6" stroke="#0e50c8" stroke-width="1.6"/><path d="M2 11.5 L12.6 11.5" stroke="#1a4fb8" stroke-width="0.9"/><text x="2.3" y="10" font-size="9" font-weight="bold" fill="#1459d2" font-family="Liberation Sans">6</text></g><circle cx="897.3" cy="736.5" r="4.3" fill="#fff" stroke="#a8a8a8" stroke-width="1"/><line x1="894.8" y1="736.5" x2="899.8" y2="736.5" stroke="#707070" stroke-width="1.1"/><line x1="897.3" y1="734.0" x2="897.3" y2="739.0" stroke="#707070" stroke-width="1.1"/><g transform="translate(910.4,729.2)"><path d="M1 1.2 Q1 0.6 1.8 0.6 L6 0.6 L7 1.8 L12.6 1.8 Q13.6 1.8 13.6 3 L13.6 10.8 Q13.6 11.8 12.6 11.8 L1.8 11.8 Q1 11.8 1 11Z" fill="url(#fbg)"/><path d="M1.6 1 L1.6 11" stroke="#0e50c8" stroke-width="1.3"/><path d="M1.5 0.9 L6 0.9 L7 2 L13 2" stroke="#1a5ad0" stroke-width="0.9" fill="none"/><path d="M12.8 3.6 L12.8 10.6" stroke="#0e50c8" stroke-width="1.6"/><path d="M2 11.5 L12.6 11.5" stroke="#1a4fb8" stroke-width="0.9"/><text x="2.3" y="10" font-size="9" font-weight="bold" fill="#1459d2" font-family="Liberation Sans">6</text></g><circle cx="897.3" cy="755.5" r="4.3" fill="#fff" stroke="#a8a8a8" stroke-width="1"/><line x1="894.8" y1="755.5" x2="899.8" y2="755.5" stroke="#707070" stroke-width="1.1"/><line x1="897.3" y1="753.0" x2="897.3" y2="758.0" stroke="#707070" stroke-width="1.1"/><g transform="translate(910.4,748.2)"><path d="M1 1.2 Q1 0.6 1.8 0.6 L6 0.6 L7 1.8 L12.6 1.8 Q13.6 1.8 13.6 3 L13.6 10.8 Q13.6 11.8 12.6 11.8 L1.8 11.8 Q1 11.8 1 11Z" fill="url(#fbg)"/><path d="M1.6 1 L1.6 11" stroke="#0e50c8" stroke-width="1.3"/><path d="M1.5 0.9 L6 0.9 L7 2 L13 2" stroke="#1a5ad0" stroke-width="0.9" fill="none"/><path d="M12.8 3.6 L12.8 10.6" stroke="#0e50c8" stroke-width="1.6"/><path d="M2 11.5 L12.6 11.5" stroke="#1a4fb8" stroke-width="0.9"/><text x="2.3" y="10" font-size="9" font-weight="bold" fill="#1459d2" font-family="Liberation Sans">6</text></g><circle cx="897.3" cy="774.5" r="4.3" fill="#fff" stroke="#a8a8a8" stroke-width="1"/><line x1="894.8" y1="774.5" x2="899.8" y2="774.5" stroke="#707070" stroke-width="1.1"/><line x1="897.3" y1="772.0" x2="897.3" y2="777.0" stroke="#707070" stroke-width="1.1"/><g transform="translate(910.4,767.2)"><path d="M1 1.2 Q1 0.6 1.8 0.6 L6 0.6 L7 1.8 L12.6 1.8 Q13.6 1.8 13.6 3 L13.6 10.8 Q13.6 11.8 12.6 11.8 L1.8 11.8 Q1 11.8 1 11Z" fill="url(#fbg)"/><path d="M1.6 1 L1.6 11" stroke="#0e50c8" stroke-width="1.3"/><path d="M1.5 0.9 L6 0.9 L7 2 L13 2" stroke="#1a5ad0" stroke-width="0.9" fill="none"/><path d="M12.8 3.6 L12.8 10.6" stroke="#0e50c8" stroke-width="1.6"/><path d="M2 11.5 L12.6 11.5" stroke="#1a4fb8" stroke-width="0.9"/><text x="2.3" y="10" font-size="9" font-weight="bold" fill="#1459d2" font-family="Liberation Sans">6</text></g><circle cx="897.3" cy="793.5" r="4.3" fill="#fff" stroke="#a8a8a8" stroke-width="1"/><line x1="894.8" y1="793.5" x2="899.8" y2="793.5" stroke="#707070" stroke-width="1.1"/><line x1="897.3" y1="791.0" x2="897.3" y2="796.0" stroke="#707070" stroke-width="1.1"/><g transform="translate(910.4,786.2)"><path d="M1 1.2 Q1 0.6 1.8 0.6 L6 0.6 L7 1.8 L12.6 1.8 Q13.6 1.8 13.6 3 L13.6 10.8 Q13.6 11.8 12.6 11.8 L1.8 11.8 Q1 11.8 1 11Z" fill="url(#fbg)"/><path d="M1.6 1 L1.6 11" stroke="#0e50c8" stroke-width="1.3"/><path d="M1.5 0.9 L6 0.9 L7 2 L13 2" stroke="#1a5ad0" stroke-width="0.9" fill="none"/><path d="M12.8 3.6 L12.8 10.6" stroke="#0e50c8" stroke-width="1.6"/><path d="M2 11.5 L12.6 11.5" stroke="#1a4fb8" stroke-width="0.9"/><text x="2.3" y="10" font-size="9" font-weight="bold" fill="#1459d2" font-family="Liberation Sans">6</text></g><circle cx="897.3" cy="812.5" r="4.3" fill="#fff" stroke="#a8a8a8" stroke-width="1"/><line x1="894.8" y1="812.5" x2="899.8" y2="812.5" stroke="#707070" stroke-width="1.1"/><line x1="897.3" y1="810.0" x2="897.3" y2="815.0" stroke="#707070" stroke-width="1.1"/><g transform="translate(910.4,805.2)"><path d="M1 1.2 Q1 0.6 1.8 0.6 L6 0.6 L7 1.8 L12.6 1.8 Q13.6 1.8 13.6 3 L13.6 10.8 Q13.6 11.8 12.6 11.8 L1.8 11.8 Q1 11.8 1 11Z" fill="url(#fbg)"/><path d="M1.6 1 L1.6 11" stroke="#0e50c8" stroke-width="1.3"/><path d="M1.5 0.9 L6 0.9 L7 2 L13 2" stroke="#1a5ad0" stroke-width="0.9" fill="none"/><path d="M12.8 3.6 L12.8 10.6" stroke="#0e50c8" stroke-width="1.6"/><path d="M2 11.5 L12.6 11.5" stroke="#1a4fb8" stroke-width="0.9"/><text x="2.3" y="10" font-size="9" font-weight="bold" fill="#1459d2" font-family="Liberation Sans">6</text></g><circle cx="897.3" cy="831.5" r="4.3" fill="#fff" stroke="#a8a8a8" stroke-width="1"/><line x1="894.8" y1="831.5" x2="899.8" y2="831.5" stroke="#707070" stroke-width="1.1"/><line x1="897.3" y1="829.0" x2="897.3" y2="834.0" stroke="#707070" stroke-width="1.1"/><g transform="translate(910.4,824.2)"><path d="M1 1.2 Q1 0.6 1.8 0.6 L6 0.6 L7 1.8 L12.6 1.8 Q13.6 1.8 13.6 3 L13.6 10.8 Q13.6 11.8 12.6 11.8 L1.8 11.8 Q1 11.8 1 11Z" fill="url(#fbg)"/><path d="M1.6 1 L1.6 11" stroke="#0e50c8" stroke-width="1.3"/><path d="M1.5 0.9 L6 0.9 L7 2 L13 2" stroke="#1a5ad0" stroke-width="0.9" fill="none"/><path d="M12.8 3.6 L12.8 10.6" stroke="#0e50c8" stroke-width="1.6"/><path d="M2 11.5 L12.6 11.5" stroke="#1a4fb8" stroke-width="0.9"/><text x="2.3" y="10" font-size="9" font-weight="bold" fill="#1459d2" font-family="Liberation Sans">6</text></g></svg>
<div style="position:absolute;left:275.5px;top:204.5px;width:39.0px;height:39.0px;border-radius:50%;background:#4b7db5;box-shadow:1.5px 1.5px 2px rgba(90,90,90,.55);color:#fff;font-weight:bold;font-size:20px;line-height:39.0px;text-align:center">1</div>
<div style="position:absolute;left:275.8px;top:287.5px;width:39.0px;height:39.0px;border-radius:50%;background:#4b7db5;box-shadow:1.5px 1.5px 2px rgba(90,90,90,.55);color:#fff;font-weight:bold;font-size:20px;line-height:39.0px;text-align:center">2</div>
<div style="position:absolute;left:1016px;top:114px;width:40px;height:40px;border-radius:50%;background:#4b7db5;box-shadow:1.5px 1.5px 2px rgba(90,90,90,.55);color:#fff;font-weight:bold;font-size:20px;line-height:40px;text-align:center">3</div>
<div style="position:absolute;left:187.5px;top:649.5px;width:39.0px;height:39.0px;border-radius:50%;background:#4b7db5;box-shadow:1.5px 1.5px 2px rgba(90,90,90,.55);color:#fff;font-weight:bold;font-size:20px;line-height:39.0px;text-align:center">4</div>
<svg width="0" height="0" style="position:absolute"><filter id="crisp" x="0" y="0" width="1" height="1" color-interpolation-filters="sRGB"><feComponentTransfer><feFuncA type="linear" slope="1.5" intercept="-0.25"/></feComponentTransfer></filter></svg>
<div style="position:absolute;left:0;top:0;width:1811px;height:866px;filter:url(#crisp)"><div style="position:absolute;left:-27px;top:61.0px;width:120px;font-size:12.7px;line-height:14.6px;color:#2e2e2e;white-space:nowrap;text-align:center;">Главное</div><div style="position:absolute;left:56px;top:61.0px;width:120px;font-size:12.7px;line-height:14.6px;color:#2e2e2e;white-space:nowrap;text-align:center;">Заправка</div><div style="position:absolute;left:139px;top:61.0px;width:120px;font-size:12.7px;line-height:14.6px;color:#2e2e2e;white-space:nowrap;text-align:center;">Ремонт</div><div style="position:absolute;left:221px;top:61.0px;width:120px;font-size:12.7px;line-height:14.6px;color:#2e2e2e;white-space:nowrap;text-align:center;">Продажи</div><div style="position:absolute;left:303px;top:61.0px;width:120px;font-size:12.7px;line-height:14.6px;color:#2e2e2e;white-space:nowrap;text-align:center;">Закупка</div><div style="position:absolute;left:382px;top:61.0px;width:120px;font-size:12.7px;line-height:14.6px;color:#2e2e2e;white-space:nowrap;text-align:center;">Склад</div><div style="position:absolute;left:467px;top:61.0px;width:120px;font-size:12.7px;line-height:14.6px;color:#2e2e2e;white-space:nowrap;text-align:center;">Логистика</div><div style="position:absolute;left:552px;top:61.0px;width:120px;font-size:12.7px;line-height:14.6px;color:#2e2e2e;white-space:nowrap;text-align:center;">Деньги</div><div style="position:absolute;left:631px;top:61.0px;width:120px;font-size:12.7px;line-height:14.6px;color:#2e2e2e;white-space:nowrap;text-align:center;">Авансы</div><div style="position:absolute;left:710px;top:61.0px;width:120px;font-size:12.7px;line-height:14.6px;color:#2e2e2e;white-space:nowrap;text-align:center;">Задачи</div><div style="position:absolute;left:789px;top:61.0px;width:120px;font-size:12.7px;line-height:14.6px;color:#2e2e2e;white-space:nowrap;text-align:center;">НСИ</div><div style="position:absolute;left:875px;top:61.0px;width:120px;font-size:12.7px;line-height:14.6px;color:#2e2e2e;white-space:nowrap;text-align:center;">Настройка</div><div style="position:absolute;left:124px;top:96.37px;font-size:18.7px;line-height:21.5px;color:#000;white-space:nowrap;text-align:left;-webkit-text-stroke:0.45px #000">РМ Менеджера</div><div style="position:absolute;left:5.5px;top:162.06px;font-size:11px;line-height:12.65px;color:#4a4a4a;white-space:nowrap;text-align:left;letter-spacing:-0.2px">Менеджер:</div><div style="position:absolute;left:428.2px;top:160.47px;font-size:12.3px;line-height:14.14px;color:#333;white-space:nowrap;text-align:left;">Обновить</div><div style="position:absolute;left:503.6px;top:162.26px;font-size:11px;line-height:12.65px;color:#4a4a4a;white-space:nowrap;text-align:left;">Не обновлять автоматически:</div><div style="position:absolute;left:6px;top:184.56px;font-size:11px;line-height:12.65px;color:#178c43;white-space:nowrap;text-align:left;">Согласование</div><div style="position:absolute;left:6px;top:473.56px;font-size:11px;line-height:12.65px;color:#178c43;white-space:nowrap;text-align:left;">Статусы заявок (невключенные в остальные группы)</div><div style="position:absolute;left:6px;top:660.46px;font-size:11px;line-height:12.65px;color:#178c43;white-space:nowrap;text-align:left;">Выдача</div><div style="position:absolute;left:885.5px;top:156.76px;font-size:11px;line-height:12.65px;color:#178c43;white-space:nowrap;text-align:left;">Не выставленные счета</div><div style="position:absolute;left:10.4px;top:205.66px;font-size:11px;line-height:12.65px;color:#333;white-space:nowrap;text-align:left;">Контрагент/подразделение</div><div style="position:absolute;left:324.3px;top:205.66px;font-size:11px;line-height:12.65px;color:#333;white-space:nowrap;text-align:left;">Объект</div><div style="position:absolute;left:537.8px;top:205.66px;font-size:11px;line-height:12.65px;color:#333;white-space:nowrap;text-align:left;">Документ приема</div><div style="position:absolute;left:750.4px;top:205.66px;font-size:11px;line-height:12.65px;color:#333;white-space:nowrap;text-align:left;">Срок исполнения</div><div style="position:absolute;left:52px;top:227.46px;font-size:11px;line-height:12.65px;color:#222;white-space:nowrap;text-align:left;">Обслуживающая организация</div><div style="position:absolute;left:127.5px;top:227.46px;width:400px;font-size:11px;line-height:12.65px;color:#222;white-space:nowrap;text-align:right;">1</div><div style="position:absolute;left:750.4px;top:227.46px;font-size:11px;line-height:12.65px;color:#222;white-space:nowrap;text-align:left;">30.05.2020 5:44:30</div><div style="position:absolute;left:324.3px;top:246.46px;font-size:11px;line-height:12.65px;color:#222;white-space:nowrap;text-align:left;">42378 Canon EP-27</div><div style="position:absolute;left:537.8px;top:246.46px;font-size:11px;line-height:12.65px;color:#222;white-space:nowrap;text-align:left;">Прием картриджей К0000000093 от 14...</div><div style="position:absolute;left:750.4px;top:246.46px;font-size:11px;line-height:12.65px;color:#222;white-space:nowrap;text-align:left;">30.05.2020 5:44:30</div><div style="position:absolute;left:52px;top:265.46px;font-size:11px;line-height:12.65px;color:#222;white-space:nowrap;text-align:left;">Продажа алкоголя</div><div style="position:absolute;left:127.5px;top:265.46px;width:400px;font-size:11px;line-height:12.65px;color:#222;white-space:nowrap;text-align:right;">3</div><div style="position:absolute;left:52px;top:284.46px;font-size:11px;line-height:12.65px;color:#222;white-space:nowrap;text-align:left;">Фитнесс-клуб</div><div style="position:absolute;left:127.5px;top:284.46px;width:400px;font-size:11px;line-height:12.65px;color:#222;white-space:nowrap;text-align:right;">1</div><div style="position:absolute;left:324.3px;top:303.46px;font-size:11px;line-height:12.65px;color:#222;white-space:nowrap;text-align:left;">3098 Canon MF416dw</div><div style="position:absolute;left:537.8px;top:303.46px;font-size:11px;line-height:12.65px;color:#222;white-space:nowrap;text-align:left;">Прием техники ремонт КАН00002562 ...</div><div style="position:absolute;left:10.4px;top:494.66px;font-size:11px;line-height:12.65px;color:#333;white-space:nowrap;text-align:left;">Контрагент/подразделение</div><div style="position:absolute;left:192.4px;top:494.66px;font-size:11px;line-height:12.65px;color:#333;white-space:nowrap;text-align:left;">Менеджер</div><div style="position:absolute;left:315px;top:494.66px;font-size:11px;line-height:12.65px;color:#333;white-space:nowrap;text-align:left;">Прием картриджей/Количество ...</div><div style="position:absolute;left:494.6px;top:494.66px;font-size:11px;line-height:12.65px;color:#333;white-space:nowrap;text-align:left;">Текущая операция</div><div style="position:absolute;left:618.6px;top:494.66px;font-size:11px;line-height:12.65px;color:#333;white-space:nowrap;text-align:left;">Количество картриджей</div><div style="position:absolute;left:750.4px;top:494.66px;font-size:11px;line-height:12.65px;color:#333;white-space:nowrap;text-align:left;">Срок исполнения</div><div style="position:absolute;left:52px;top:516.46px;font-size:11px;line-height:12.65px;color:#222;white-space:nowrap;text-align:left;">Автосалон легковой</div><div style="position:absolute;left:84.5px;top:516.46px;width:400px;font-size:11px;line-height:12.65px;color:#222;white-space:nowrap;text-align:right;">1</div><div style="position:absolute;left:341.20000000000005px;top:516.46px;width:400px;font-size:11px;line-height:12.65px;color:#222;white-space:nowrap;text-align:right;">2</div><div style="position:absolute;left:750.4px;top:516.46px;font-size:11px;line-height:12.65px;color:#222;white-space:nowrap;text-align:left;">30.05.2020 5:45:55</div><div style="position:absolute;left:52px;top:535.46px;font-size:11px;line-height:12.65px;color:#222;white-space:nowrap;text-align:left;">Обслуживающая органи...</div><div style="position:absolute;left:84.5px;top:535.46px;width:400px;font-size:11px;line-height:12.65px;color:#222;white-space:nowrap;text-align:right;">1</div><div style="position:absolute;left:341.20000000000005px;top:535.46px;width:400px;font-size:11px;line-height:12.65px;color:#222;white-space:nowrap;text-align:right;">2</div><div style="position:absolute;left:750.4px;top:535.46px;font-size:11px;line-height:12.65px;color:#222;white-space:nowrap;text-align:left;">30.05.2020 5:44:30</div><div style="position:absolute;left:52px;top:554.46px;font-size:11px;line-height:12.65px;color:#222;white-space:nowrap;text-align:left;">Омега</div><div style="position:absolute;left:84.5px;top:554.46px;width:400px;font-size:11px;line-height:12.65px;color:#222;white-space:nowrap;text-align:right;">1</div><div style="position:absolute;left:341.20000000000005px;top:554.46px;width:400px;font-size:11px;line-height:12.65px;color:#222;white-space:nowrap;text-align:right;">1</div><div style="position:absolute;left:750.4px;top:554.46px;font-size:11px;line-height:12.65px;color:#222;white-space:nowrap;text-align:left;">12.01.2019 8:47:00</div><div style="position:absolute;left:52px;top:573.46px;font-size:11px;line-height:12.65px;color:#222;white-space:nowrap;text-align:left;">Торговый центр</div><div style="position:absolute;left:84.5px;top:573.46px;width:400px;font-size:11px;line-height:12.65px;color:#222;white-space:nowrap;text-align:right;">1</div><div style="position:absolute;left:341.20000000000005px;top:573.46px;width:400px;font-size:11px;line-height:12.65px;color:#222;white-space:nowrap;text-align:right;">2</div><div style="position:absolute;left:750.4px;top:573.46px;font-size:11px;line-height:12.65px;color:#222;white-space:nowrap;text-align:left;">30.05.2020 5:43:47</div><div style="position:absolute;left:10.4px;top:681.66px;font-size:11px;line-height:12.65px;color:#333;white-space:nowrap;text-align:left;">Контрагент/Подразделение</div><div style="position:absolute;left:432.9px;top:681.66px;font-size:11px;line-height:12.65px;color:#333;white-space:nowrap;text-align:left;">Объект</div><div style="position:absolute;left:592.6px;top:681.66px;font-size:11px;line-height:12.65px;color:#333;white-space:nowrap;text-align:left;">Документ приема</div><div style="position:absolute;left:750.2px;top:681.66px;font-size:11px;line-height:12.65px;color:#333;white-space:nowrap;text-align:left;">Срок исполнения</div><div style="position:absolute;left:52px;top:703.46px;font-size:11px;line-height:12.65px;color:#222;white-space:nowrap;text-align:left;">Городской транспорт</div><div style="position:absolute;left:183px;top:703.46px;width:400px;font-size:11px;line-height:12.65px;color:#222;white-space:nowrap;text-align:right;">1</div><div style="position:absolute;left:750.2px;top:703.46px;font-size:11px;line-height:12.65px;color:#222;white-space:nowrap;text-align:left;">05.01.2019 6:35:28</div><div style="position:absolute;left:52px;top:722.46px;font-size:11px;line-height:12.65px;color:#222;white-space:nowrap;text-align:left;">ИП Иванов А.А.</div><div style="position:absolute;left:183px;top:722.46px;width:400px;font-size:11px;line-height:12.65px;color:#222;white-space:nowrap;text-align:right;">1</div><div style="position:absolute;left:52px;top:741.46px;font-size:11px;line-height:12.65px;color:#222;white-space:nowrap;text-align:left;">Легенда России</div><div style="position:absolute;left:183px;top:741.46px;width:400px;font-size:11px;line-height:12.65px;color:#222;white-space:nowrap;text-align:right;">9</div><div style="position:absolute;left:750.2px;top:741.46px;font-size:11px;line-height:12.65px;color:#222;white-space:nowrap;text-align:left;">15.01.2019 5:53:15</div><div style="position:absolute;left:52px;top:760.46px;font-size:11px;line-height:12.65px;color:#222;white-space:nowrap;text-align:left;">Ломбард</div><div style="position:absolute;left:183px;top:760.46px;width:400px;font-size:11px;line-height:12.65px;color:#222;white-space:nowrap;text-align:right;">2</div><div style="position:absolute;left:750.2px;top:760.46px;font-size:11px;line-height:12.65px;color:#222;white-space:nowrap;text-align:left;">11.01.2019 6:22:47</div><div style="position:absolute;left:52px;top:779.46px;font-size:11px;line-height:12.65px;color:#222;white-space:nowrap;text-align:left;">Нефтяная компания</div><div style="position:absolute;left:183px;top:779.46px;width:400px;font-size:11px;line-height:12.65px;color:#222;white-space:nowrap;text-align:right;">10</div><div style="position:absolute;left:750.2px;top:779.46px;font-size:11px;line-height:12.65px;color:#222;white-space:nowrap;text-align:left;">15.01.2019 9:19:44</div><div style="position:absolute;left:52px;top:798.46px;font-size:11px;line-height:12.65px;color:#222;white-space:nowrap;text-align:left;">Паспортно стол</div><div style="position:absolute;left:183px;top:798.46px;width:400px;font-size:11px;line-height:12.65px;color:#222;white-space:nowrap;text-align:right;">4</div><div style="position:absolute;left:750.2px;top:798.46px;font-size:11px;line-height:12.65px;color:#222;white-space:nowrap;text-align:left;">15.01.2019 12:13:03</div><div style="position:absolute;left:52px;top:817.46px;font-size:11px;line-height:12.65px;color:#222;white-space:nowrap;text-align:left;">Техникум</div><div style="position:absolute;left:183px;top:817.46px;width:400px;font-size:11px;line-height:12.65px;color:#222;white-space:nowrap;text-align:right;">7</div><div style="position:absolute;left:750.2px;top:817.46px;font-size:11px;line-height:12.65px;color:#222;white-space:nowrap;text-align:left;">15.01.2019 6:15:16</div><div style="position:absolute;left:52px;top:836.46px;font-size:11px;line-height:12.65px;color:#222;white-space:nowrap;text-align:left;">Частное лицо</div><div style="position:absolute;left:183px;top:836.46px;width:400px;font-size:11px;line-height:12.65px;color:#222;white-space:nowrap;text-align:right;">1</div><div style="position:absolute;left:750.2px;top:836.46px;font-size:11px;line-height:12.65px;color:#222;white-space:nowrap;text-align:left;">11.01.2019 8:10:53</div><div style="position:absolute;left:889.9px;top:177.66px;font-size:11px;line-height:12.65px;color:#333;white-space:nowrap;text-align:left;">Контрагент</div><div style="position:absolute;left:1133.7px;top:177.66px;font-size:11px;line-height:12.65px;color:#333;white-space:nowrap;text-align:left;">Было принято</div><div style="position:absolute;left:1257px;top:177.66px;font-size:11px;line-height:12.65px;color:#333;white-space:nowrap;text-align:left;">Невыставлено</div><div style="position:absolute;left:1341.2px;top:177.66px;font-size:11px;line-height:12.65px;color:#333;white-space:nowrap;text-align:left;">Продажа</div><div style="position:absolute;left:1414.5px;top:177.66px;font-size:11px;line-height:12.65px;color:#333;white-space:nowrap;text-align:left;">Расходы</div><div style="position:absolute;left:1471.3px;top:177.66px;font-size:11px;line-height:12.65px;color:#333;white-space:nowrap;text-align:left;">Менеджер</div><div style="position:absolute;left:1570.4px;top:177.66px;font-size:11px;line-height:12.65px;color:#333;white-space:nowrap;text-align:left;">Комментарий</div><div style="position:absolute;left:932px;top:199.46px;font-size:11px;line-height:12.65px;color:#222;white-space:nowrap;text-align:left;">Итого:</div><div style="position:absolute;left:848px;top:199.46px;width:400px;font-size:11px;line-height:12.65px;color:#222;white-space:nowrap;text-align:right;">192</div><div style="position:absolute;left:932.5px;top:199.46px;width:400px;font-size:11px;line-height:12.65px;color:#222;white-space:nowrap;text-align:right;">175</div><div style="position:absolute;left:1005.3px;top:199.46px;width:400px;font-size:11px;line-height:12.65px;color:#222;white-space:nowrap;text-align:right;">75 220,00</div><div style="position:absolute;left:1062px;top:199.46px;width:400px;font-size:11px;line-height:12.65px;color:#222;white-space:nowrap;text-align:right;">30 223,40</div><div style="position:absolute;left:931px;top:218.46px;font-size:11px;line-height:12.65px;color:#222;white-space:nowrap;text-align:left;">Автосалон легковой</div><div style="position:absolute;left:848px;top:218.46px;width:400px;font-size:11px;line-height:12.65px;color:#222;white-space:nowrap;text-align:right;">6</div><div style="position:absolute;left:932.5px;top:218.46px;width:400px;font-size:11px;line-height:12.65px;color:#222;white-space:nowrap;text-align:right;">6</div><div style="position:absolute;left:1005.3px;top:218.46px;width:400px;font-size:11px;line-height:12.65px;color:#222;white-space:nowrap;text-align:right;">5 060,00</div><div style="position:absolute;left:1062px;top:218.46px;width:400px;font-size:11px;line-height:12.65px;color:#222;white-space:nowrap;text-align:right;">1 485,00</div><div style="position:absolute;left:931px;top:237.46px;font-size:11px;line-height:12.65px;color:#222;white-space:nowrap;text-align:left;">Автотранспортное предприятие</div><div style="position:absolute;left:848px;top:237.46px;width:400px;font-size:11px;line-height:12.65px;color:#222;white-space:nowrap;text-align:right;">6</div><div style="position:absolute;left:932.5px;top:237.46px;width:400px;font-size:11px;line-height:12.65px;color:#222;white-space:nowrap;text-align:right;">6</div><div style="position:absolute;left:1005.3px;top:237.46px;width:400px;font-size:11px;line-height:12.65px;color:#222;white-space:nowrap;text-align:right;">4 590,00</div><div style="position:absolute;left:1062px;top:237.46px;width:400px;font-size:11px;line-height:12.65px;color:#222;white-space:nowrap;text-align:right;">1 586,50</div><div style="position:absolute;left:1570.4px;top:237.46px;font-size:11px;line-height:12.65px;color:#222;white-space:nowrap;text-align:left;">принесли сами</div><div style="position:absolute;left:931px;top:256.46px;font-size:11px;line-height:12.65px;color:#222;white-space:nowrap;text-align:left;">Автоцентр</div><div style="position:absolute;left:848px;top:256.46px;width:400px;font-size:11px;line-height:12.65px;color:#222;white-space:nowrap;text-align:right;">1</div><div style="position:absolute;left:932.5px;top:256.46px;width:400px;font-size:11px;line-height:12.65px;color:#222;white-space:nowrap;text-align:right;">1</div><div style="position:absolute;left:1005.3px;top:256.46px;width:400px;font-size:11px;line-height:12.65px;color:#222;white-space:nowrap;text-align:right;">200,00</div><div style="position:absolute;left:1062px;top:256.46px;width:400px;font-size:11px;line-height:12.65px;color:#222;white-space:nowrap;text-align:right;">132,50</div><div style="position:absolute;left:931px;top:275.46px;font-size:11px;line-height:12.65px;color:#222;white-space:nowrap;text-align:left;">Банк средний</div><div style="position:absolute;left:848px;top:275.46px;width:400px;font-size:11px;line-height:12.65px;color:#222;white-space:nowrap;text-align:right;">5</div><div style="position:absolute;left:932.5px;top:275.46px;width:400px;font-size:11px;line-height:12.65px;color:#222;white-space:nowrap;text-align:right;">4</div><div style="position:absolute;left:1005.3px;top:275.46px;width:400px;font-size:11px;line-height:12.65px;color:#222;white-space:nowrap;text-align:right;">6 100,00</div><div style="position:absolute;left:1062px;top:275.46px;width:400px;font-size:11px;line-height:12.65px;color:#222;white-space:nowrap;text-align:right;">1 298,70</div><div style="position:absolute;left:1570.4px;top:275.46px;font-size:11px;line-height:12.65px;color:#222;white-space:nowrap;text-align:left;">от техники</div><div style="position:absolute;left:931px;top:294.46px;font-size:11px;line-height:12.65px;color:#222;white-space:nowrap;text-align:left;">Грузовые перевозки</div><div style="position:absolute;left:848px;top:294.46px;width:400px;font-size:11px;line-height:12.65px;color:#222;white-space:nowrap;text-align:right;">6</div><div style="position:absolute;left:932.5px;top:294.46px;width:400px;font-size:11px;line-height:12.65px;color:#222;white-space:nowrap;text-align:right;">1</div><div style="position:absolute;left:1005.3px;top:294.46px;width:400px;font-size:11px;line-height:12.65px;color:#222;white-space:nowrap;text-align:right;">160,00</div><div style="position:absolute;left:1062px;top:294.46px;width:400px;font-size:11px;line-height:12.65px;color:#222;white-space:nowrap;text-align:right;">89,90</div><div style="position:absolute;left:931px;top:313.46px;font-size:11px;line-height:12.65px;color:#222;white-space:nowrap;text-align:left;">Детская школа</div><div style="position:absolute;left:848px;top:313.46px;width:400px;font-size:11px;line-height:12.65px;color:#222;white-space:nowrap;text-align:right;">2</div><div style="position:absolute;left:932.5px;top:313.46px;width:400px;font-size:11px;line-height:12.65px;color:#222;white-space:nowrap;text-align:right;">2</div><div style="position:absolute;left:1005.3px;top:313.46px;width:400px;font-size:11px;line-height:12.65px;color:#222;white-space:nowrap;text-align:right;">750,00</div><div style="position:absolute;left:1062px;top:313.46px;width:400px;font-size:11px;line-height:12.65px;color:#222;white-space:nowrap;text-align:right;">60,00</div><div style="position:absolute;left:1570.4px;top:313.46px;font-size:11px;line-height:12.65px;color:#222;white-space:nowrap;text-align:left;">бледно печатает 39659</div><div style="position:absolute;left:931px;top:332.46px;font-size:11px;line-height:12.65px;color:#222;white-space:nowrap;text-align:left;">Завод ЖБИ</div><div style="position:absolute;left:848px;top:332.46px;width:400px;font-size:11px;line-height:12.65px;color:#222;white-space:nowrap;text-align:right;">4</div><div style="position:absolute;left:932.5px;top:332.46px;width:400px;font-size:11px;line-height:12.65px;color:#222;white-space:nowrap;text-align:right;">4</div><div style="position:absolute;left:1005.3px;top:332.46px;width:400px;font-size:11px;line-height:12.65px;color:#222;white-space:nowrap;text-align:right;">960,00</div><div style="position:absolute;left:1062px;top:332.46px;width:400px;font-size:11px;line-height:12.65px;color:#222;white-space:nowrap;text-align:right;">317,50</div><div style="position:absolute;left:1570.4px;top:332.46px;font-size:11px;line-height:12.65px;color:#222;white-space:nowrap;text-align:left;">41788 повторяет изображение</div><div style="position:absolute;left:931px;top:351.46px;font-size:11px;line-height:12.65px;color:#222;white-space:nowrap;text-align:left;">ИП Петров Б.Б.</div><div style="position:absolute;left:848px;top:351.46px;width:400px;font-size:11px;line-height:12.65px;color:#222;white-space:nowrap;text-align:right;">2</div><div style="position:absolute;left:932.5px;top:351.46px;width:400px;font-size:11px;line-height:12.65px;color:#222;white-space:nowrap;text-align:right;">2</div><div style="position:absolute;left:1005.3px;top:351.46px;width:400px;font-size:11px;line-height:12.65px;color:#222;white-space:nowrap;text-align:right;">3 100,00</div><div style="position:absolute;left:1062px;top:351.46px;width:400px;font-size:11px;line-height:12.65px;color:#222;white-space:nowrap;text-align:right;">1 000,20</div><div style="position:absolute;left:931px;top:370.46px;font-size:11px;line-height:12.65px;color:#222;white-space:nowrap;text-align:left;">Ключная компания</div><div style="position:absolute;left:848px;top:370.46px;width:400px;font-size:11px;line-height:12.65px;color:#222;white-space:nowrap;text-align:right;">2</div><div style="position:absolute;left:932.5px;top:370.46px;width:400px;font-size:11px;line-height:12.65px;color:#222;white-space:nowrap;text-align:right;">1</div><div style="position:absolute;left:1005.3px;top:370.46px;width:400px;font-size:11px;line-height:12.65px;color:#222;white-space:nowrap;text-align:right;">350,00</div><div style="position:absolute;left:1062px;top:370.46px;width:400px;font-size:11px;line-height:12.65px;color:#222;white-space:nowrap;text-align:right;">54,00</div><div style="position:absolute;left:931px;top:389.46px;font-size:11px;line-height:12.65px;color:#222;white-space:nowrap;text-align:left;">Легенда России</div><div style="position:absolute;left:848px;top:389.46px;width:400px;font-size:11px;line-height:12.65px;color:#222;white-space:nowrap;text-align:right;">9</div><div style="position:absolute;left:932.5px;top:389.46px;width:400px;font-size:11px;line-height:12.65px;color:#222;white-space:nowrap;text-align:right;">9</div><div style="position:absolute;left:1005.3px;top:389.46px;width:400px;font-size:11px;line-height:12.65px;color:#222;white-space:nowrap;text-align:right;">4 200,00</div><div style="position:absolute;left:1062px;top:389.46px;width:400px;font-size:11px;line-height:12.65px;color:#222;white-space:nowrap;text-align:right;">911,60</div><div style="position:absolute;left:931px;top:408.46px;font-size:11px;line-height:12.65px;color:#222;white-space:nowrap;text-align:left;">Ломбард</div><div style="position:absolute;left:848px;top:408.46px;width:400px;font-size:11px;line-height:12.65px;color:#222;white-space:nowrap;text-align:right;">6</div><div style="position:absolute;left:932.5px;top:408.46px;width:400px;font-size:11px;line-height:12.65px;color:#222;white-space:nowrap;text-align:right;">6</div><div style="position:absolute;left:1005.3px;top:408.46px;width:400px;font-size:11px;line-height:12.65px;color:#222;white-space:nowrap;text-align:right;">2 110,00</div><div style="position:absolute;left:1062px;top:408.46px;width:400px;font-size:11px;line-height:12.65px;color:#222;white-space:nowrap;text-align:right;">2 207,00</div><div style="position:absolute;left:1570.4px;top:408.46px;font-size:11px;line-height:12.65px;color:#222;white-space:nowrap;text-align:left;">выдача с 17.00 до 18.00</div><div style="position:absolute;left:931px;top:427.46px;font-size:11px;line-height:12.65px;color:#222;white-space:nowrap;text-align:left;">Мясная компания</div><div style="position:absolute;left:848px;top:427.46px;width:400px;font-size:11px;line-height:12.65px;color:#222;white-space:nowrap;text-align:right;">9</div><div style="position:absolute;left:932.5px;top:427.46px;width:400px;font-size:11px;line-height:12.65px;color:#222;white-space:nowrap;text-align:right;">9</div><div style="position:absolute;left:1005.3px;top:427.46px;width:400px;font-size:11px;line-height:12.65px;color:#222;white-space:nowrap;text-align:right;">2 920,00</div><div style="position:absolute;left:1062px;top:427.46px;width:400px;font-size:11px;line-height:12.65px;color:#222;white-space:nowrap;text-align:right;">701,00</div><div style="position:absolute;left:1570.4px;top:427.46px;font-size:11px;line-height:12.65px;color:#222;white-space:nowrap;text-align:left;">к 13.00</div><div style="position:absolute;left:931px;top:446.46px;font-size:11px;line-height:12.65px;color:#222;white-space:nowrap;text-align:left;">Нефтяная компания</div><div style="position:absolute;left:848px;top:446.46px;width:400px;font-size:11px;line-height:12.65px;color:#222;white-space:nowrap;text-align:right;">10</div><div style="position:absolute;left:932.5px;top:446.46px;width:400px;font-size:11px;line-height:12.65px;color:#222;white-space:nowrap;text-align:right;">1</div><div style="position:absolute;left:1005.3px;top:446.46px;width:400px;font-size:11px;line-height:12.65px;color:#222;white-space:nowrap;text-align:right;">250,00</div><div style="position:absolute;left:1062px;top:446.46px;width:400px;font-size:11px;line-height:12.65px;color:#222;white-space:nowrap;text-align:right;">360,00</div><div style="position:absolute;left:931px;top:465.46px;font-size:11px;line-height:12.65px;color:#222;white-space:nowrap;text-align:left;">Обслуживающая организация</div><div style="position:absolute;left:848px;top:465.46px;width:400px;font-size:11px;line-height:12.65px;color:#222;white-space:nowrap;text-align:right;">3</div><div style="position:absolute;left:932.5px;top:465.46px;width:400px;font-size:11px;line-height:12.65px;color:#222;white-space:nowrap;text-align:right;">3</div><div style="position:absolute;left:1005.3px;top:465.46px;width:400px;font-size:11px;line-height:12.65px;color:#222;white-space:nowrap;text-align:right;">1 010,00</div><div style="position:absolute;left:1062px;top:465.46px;width:400px;font-size:11px;line-height:12.65px;color:#222;white-space:nowrap;text-align:right;">629,50</div><div style="position:absolute;left:931px;top:484.46px;font-size:11px;line-height:12.65px;color:#222;white-space:nowrap;text-align:left;">Омега</div><div style="position:absolute;left:848px;top:484.46px;width:400px;font-size:11px;line-height:12.65px;color:#222;white-space:nowrap;text-align:right;">7</div><div style="position:absolute;left:932.5px;top:484.46px;width:400px;font-size:11px;line-height:12.65px;color:#222;white-space:nowrap;text-align:right;">7</div><div style="position:absolute;left:1005.3px;top:484.46px;width:400px;font-size:11px;line-height:12.65px;color:#222;white-space:nowrap;text-align:right;">5 050,00</div><div style="position:absolute;left:1062px;top:484.46px;width:400px;font-size:11px;line-height:12.65px;color:#222;white-space:nowrap;text-align:right;">2 318,50</div><div style="position:absolute;left:931px;top:503.46px;font-size:11px;line-height:12.65px;color:#222;white-space:nowrap;text-align:left;">Охранная компания</div><div style="position:absolute;left:848px;top:503.46px;width:400px;font-size:11px;line-height:12.65px;color:#222;white-space:nowrap;text-align:right;">6</div><div style="position:absolute;left:932.5px;top:503.46px;width:400px;font-size:11px;line-height:12.65px;color:#222;white-space:nowrap;text-align:right;">6</div><div style="position:absolute;left:1005.3px;top:503.46px;width:400px;font-size:11px;line-height:12.65px;color:#222;white-space:nowrap;text-align:right;">1 090,00</div><div style="position:absolute;left:1062px;top:503.46px;width:400px;font-size:11px;line-height:12.65px;color:#222;white-space:nowrap;text-align:right;">579,50</div><div style="position:absolute;left:931px;top:522.46px;font-size:11px;line-height:12.65px;color:#222;white-space:nowrap;text-align:left;">Паспортно стол</div><div style="position:absolute;left:848px;top:522.46px;width:400px;font-size:11px;line-height:12.65px;color:#222;white-space:nowrap;text-align:right;">4</div><div style="position:absolute;left:932.5px;top:522.46px;width:400px;font-size:11px;line-height:12.65px;color:#222;white-space:nowrap;text-align:right;">4</div><div style="position:absolute;left:1005.3px;top:522.46px;width:400px;font-size:11px;line-height:12.65px;color:#222;white-space:nowrap;text-align:right;">2 150,00</div><div style="position:absolute;left:1062px;top:522.46px;width:400px;font-size:11px;line-height:12.65px;color:#222;white-space:nowrap;text-align:right;">769,00</div><div style="position:absolute;left:931px;top:541.46px;font-size:11px;line-height:12.65px;color:#222;white-space:nowrap;text-align:left;">Снэки</div><div style="position:absolute;left:848px;top:541.46px;width:400px;font-size:11px;line-height:12.65px;color:#222;white-space:nowrap;text-align:right;">10</div><div style="position:absolute;left:932.5px;top:541.46px;width:400px;font-size:11px;line-height:12.65px;color:#222;white-space:nowrap;text-align:right;">10</div><div style="position:absolute;left:1005.3px;top:541.46px;width:400px;font-size:11px;line-height:12.65px;color:#222;white-space:nowrap;text-align:right;">4 170,00</div><div style="position:absolute;left:1062px;top:541.46px;width:400px;font-size:11px;line-height:12.65px;color:#222;white-space:nowrap;text-align:right;">1 715,00</div><div style="position:absolute;left:1570.4px;top:541.46px;font-size:11px;line-height:12.65px;color:#222;white-space:nowrap;text-align:left;">35227 брак, есть принтер для проверки</div><div style="position:absolute;left:931px;top:560.46px;font-size:11px;line-height:12.65px;color:#222;white-space:nowrap;text-align:left;">Софтовая компания</div><div style="position:absolute;left:848px;top:560.46px;width:400px;font-size:11px;line-height:12.65px;color:#222;white-space:nowrap;text-align:right;">4</div><div style="position:absolute;left:932.5px;top:560.46px;width:400px;font-size:11px;line-height:12.65px;color:#222;white-space:nowrap;text-align:right;">4</div><div style="position:absolute;left:1005.3px;top:560.46px;width:400px;font-size:11px;line-height:12.65px;color:#222;white-space:nowrap;text-align:right;">4 060,00</div><div style="position:absolute;left:1062px;top:560.46px;width:400px;font-size:11px;line-height:12.65px;color:#222;white-space:nowrap;text-align:right;">1 677,00</div><div style="position:absolute;left:1570.4px;top:560.46px;font-size:11px;line-height:12.65px;color:#222;white-space:nowrap;text-align:left;">14.01 к 11.00</div><div style="position:absolute;left:931px;top:579.46px;font-size:11px;line-height:12.65px;color:#222;white-space:nowrap;text-align:left;">Социальный центр</div><div style="position:absolute;left:848px;top:579.46px;width:400px;font-size:11px;line-height:12.65px;color:#222;white-space:nowrap;text-align:right;">1</div><div style="position:absolute;left:932.5px;top:579.46px;width:400px;font-size:11px;line-height:12.65px;color:#222;white-space:nowrap;text-align:right;">1</div><div style="position:absolute;left:1005.3px;top:579.46px;width:400px;font-size:11px;line-height:12.65px;color:#222;white-space:nowrap;text-align:right;">250,00</div><div style="position:absolute;left:1062px;top:579.46px;width:400px;font-size:11px;line-height:12.65px;color:#222;white-space:nowrap;text-align:right;">154,00</div><div style="position:absolute;left:1570.4px;top:579.46px;font-size:11px;line-height:12.65px;color:#222;white-space:nowrap;text-align:left;">белая полоса 41827</div><div style="position:absolute;left:931px;top:598.46px;font-size:11px;line-height:12.65px;color:#222;white-space:nowrap;text-align:left;">Спортивный бассейн</div><div style="position:absolute;left:848px;top:598.46px;width:400px;font-size:11px;line-height:12.65px;color:#222;white-space:nowrap;text-align:right;">4</div><div style="position:absolute;left:932.5px;top:598.46px;width:400px;font-size:11px;line-height:12.65px;color:#222;white-space:nowrap;text-align:right;">4</div><div style="position:absolute;left:1005.3px;top:598.46px;width:400px;font-size:11px;line-height:12.65px;color:#222;white-space:nowrap;text-align:right;">800,00</div><div style="position:absolute;left:1062px;top:598.46px;width:400px;font-size:11px;line-height:12.65px;color:#222;white-space:nowrap;text-align:right;">408,00</div><div style="position:absolute;left:931px;top:617.46px;font-size:11px;line-height:12.65px;color:#222;white-space:nowrap;text-align:left;">Спортивный комплекс</div><div style="position:absolute;left:848px;top:617.46px;width:400px;font-size:11px;line-height:12.65px;color:#222;white-space:nowrap;text-align:right;">4</div><div style="position:absolute;left:932.5px;top:617.46px;width:400px;font-size:11px;line-height:12.65px;color:#222;white-space:nowrap;text-align:right;">4</div><div style="position:absolute;left:1005.3px;top:617.46px;width:400px;font-size:11px;line-height:12.65px;color:#222;white-space:nowrap;text-align:right;">640,00</div><div style="position:absolute;left:1062px;top:617.46px;width:400px;font-size:11px;line-height:12.65px;color:#222;white-space:nowrap;text-align:right;">433,50</div><div style="position:absolute;left:931px;top:636.46px;font-size:11px;line-height:12.65px;color:#222;white-space:nowrap;text-align:left;">Степная компания</div><div style="position:absolute;left:848px;top:636.46px;width:400px;font-size:11px;line-height:12.65px;color:#222;white-space:nowrap;text-align:right;">8</div><div style="position:absolute;left:932.5px;top:636.46px;width:400px;font-size:11px;line-height:12.65px;color:#222;white-space:nowrap;text-align:right;">8</div><div style="position:absolute;left:1005.3px;top:636.46px;width:400px;font-size:11px;line-height:12.65px;color:#222;white-space:nowrap;text-align:right;">2 540,00</div><div style="position:absolute;left:1062px;top:636.46px;width:400px;font-size:11px;line-height:12.65px;color:#222;white-space:nowrap;text-align:right;">1 643,00</div><div style="position:absolute;left:931px;top:655.46px;font-size:11px;line-height:12.65px;color:#222;white-space:nowrap;text-align:left;">Стоматология</div><div style="position:absolute;left:848px;top:655.46px;width:400px;font-size:11px;line-height:12.65px;color:#222;white-space:nowrap;text-align:right;">23</div><div style="position:absolute;left:932.5px;top:655.46px;width:400px;font-size:11px;line-height:12.65px;color:#222;white-space:nowrap;text-align:right;">23</div><div style="position:absolute;left:1005.3px;top:655.46px;width:400px;font-size:11px;line-height:12.65px;color:#222;white-space:nowrap;text-align:right;">8 870,00</div><div style="position:absolute;left:1062px;top:655.46px;width:400px;font-size:11px;line-height:12.65px;color:#222;white-space:nowrap;text-align:right;">2 878,80</div><div style="position:absolute;left:931px;top:674.46px;font-size:11px;line-height:12.65px;color:#222;white-space:nowrap;text-align:left;">Страховая компания</div><div style="position:absolute;left:848px;top:674.46px;width:400px;font-size:11px;line-height:12.65px;color:#222;white-space:nowrap;text-align:right;">4</div><div style="position:absolute;left:932.5px;top:674.46px;width:400px;font-size:11px;line-height:12.65px;color:#222;white-space:nowrap;text-align:right;">4</div><div style="position:absolute;left:1005.3px;top:674.46px;width:400px;font-size:11px;line-height:12.65px;color:#222;white-space:nowrap;text-align:right;">3 430,00</div><div style="position:absolute;left:1062px;top:674.46px;width:400px;font-size:11px;line-height:12.65px;color:#222;white-space:nowrap;text-align:right;">1 049,00</div><div style="position:absolute;left:931px;top:693.46px;font-size:11px;line-height:12.65px;color:#222;white-space:nowrap;text-align:left;">Техникум</div><div style="position:absolute;left:848px;top:693.46px;width:400px;font-size:11px;line-height:12.65px;color:#222;white-space:nowrap;text-align:right;">15</div><div style="position:absolute;left:932.5px;top:693.46px;width:400px;font-size:11px;line-height:12.65px;color:#222;white-space:nowrap;text-align:right;">15</div><div style="position:absolute;left:1005.3px;top:693.46px;width:400px;font-size:11px;line-height:12.65px;color:#e00000;white-space:nowrap;text-align:right;">1 120,00</div><div style="position:absolute;left:1062px;top:693.46px;width:400px;font-size:11px;line-height:12.65px;color:#222;white-space:nowrap;text-align:right;">1 354,00</div><div style="position:absolute;left:931px;top:712.46px;font-size:11px;line-height:12.65px;color:#222;white-space:nowrap;text-align:left;">Торговый центр</div><div style="position:absolute;left:848px;top:712.46px;width:400px;font-size:11px;line-height:12.65px;color:#222;white-space:nowrap;text-align:right;">5</div><div style="position:absolute;left:932.5px;top:712.46px;width:400px;font-size:11px;line-height:12.65px;color:#222;white-space:nowrap;text-align:right;">4</div><div style="position:absolute;left:1005.3px;top:712.46px;width:400px;font-size:11px;line-height:12.65px;color:#222;white-space:nowrap;text-align:right;">1 150,00</div><div style="position:absolute;left:1062px;top:712.46px;width:400px;font-size:11px;line-height:12.65px;color:#222;white-space:nowrap;text-align:right;">299,50</div><div style="position:absolute;left:931px;top:731.46px;font-size:11px;line-height:12.65px;color:#222;white-space:nowrap;text-align:left;">Университет</div><div style="position:absolute;left:848px;top:731.46px;width:400px;font-size:11px;line-height:12.65px;color:#222;white-space:nowrap;text-align:right;">5</div><div style="position:absolute;left:932.5px;top:731.46px;width:400px;font-size:11px;line-height:12.65px;color:#222;white-space:nowrap;text-align:right;">5</div><div style="position:absolute;left:1005.3px;top:731.46px;width:400px;font-size:11px;line-height:12.65px;color:#222;white-space:nowrap;text-align:right;">710,00</div><div style="position:absolute;left:1062px;top:731.46px;width:400px;font-size:11px;line-height:12.65px;color:#222;white-space:nowrap;text-align:right;">472,50</div><div style="position:absolute;left:931px;top:750.46px;font-size:11px;line-height:12.65px;color:#222;white-space:nowrap;text-align:left;">Училище</div><div style="position:absolute;left:848px;top:750.46px;width:400px;font-size:11px;line-height:12.65px;color:#222;white-space:nowrap;text-align:right;">6</div><div style="position:absolute;left:932.5px;top:750.46px;width:400px;font-size:11px;line-height:12.65px;color:#222;white-space:nowrap;text-align:right;">6</div><div style="position:absolute;left:1005.3px;top:750.46px;width:400px;font-size:11px;line-height:12.65px;color:#222;white-space:nowrap;text-align:right;">1 150,00</div><div style="position:absolute;left:1062px;top:750.46px;width:400px;font-size:11px;line-height:12.65px;color:#222;white-space:nowrap;text-align:right;">460,00</div><div style="position:absolute;left:931px;top:769.46px;font-size:11px;line-height:12.65px;color:#222;white-space:nowrap;text-align:left;">Центр продажи машин</div><div style="position:absolute;left:848px;top:769.46px;width:400px;font-size:11px;line-height:12.65px;color:#222;white-space:nowrap;text-align:right;">3</div><div style="position:absolute;left:932.5px;top:769.46px;width:400px;font-size:11px;line-height:12.65px;color:#222;white-space:nowrap;text-align:right;">3</div><div style="position:absolute;left:1005.3px;top:769.46px;width:400px;font-size:11px;line-height:12.65px;color:#222;white-space:nowrap;text-align:right;">1 650,00</div><div style="position:absolute;left:1062px;top:769.46px;width:400px;font-size:11px;line-height:12.65px;color:#222;white-space:nowrap;text-align:right;">299,70</div><div style="position:absolute;left:931px;top:788.46px;font-size:11px;line-height:12.65px;color:#222;white-space:nowrap;text-align:left;">Частное лицо</div><div style="position:absolute;left:848px;top:788.46px;width:400px;font-size:11px;line-height:12.65px;color:#222;white-space:nowrap;text-align:right;">4</div><div style="position:absolute;left:932.5px;top:788.46px;width:400px;font-size:11px;line-height:12.65px;color:#222;white-space:nowrap;text-align:right;">4</div><div style="position:absolute;left:1005.3px;top:788.46px;width:400px;font-size:11px;line-height:12.65px;color:#222;white-space:nowrap;text-align:right;">2 250,00</div><div style="position:absolute;left:1062px;top:788.46px;width:400px;font-size:11px;line-height:12.65px;color:#222;white-space:nowrap;text-align:right;">369,50</div><div style="position:absolute;left:1570.4px;top:788.46px;font-size:11px;line-height:12.65px;color:#222;white-space:nowrap;text-align:left;">от СВ Поверенный</div><div style="position:absolute;left:931px;top:807.46px;font-size:11px;line-height:12.65px;color:#222;white-space:nowrap;text-align:left;">Шинная компания</div><div style="position:absolute;left:848px;top:807.46px;width:400px;font-size:11px;line-height:12.65px;color:#222;white-space:nowrap;text-align:right;">2</div><div style="position:absolute;left:932.5px;top:807.46px;width:400px;font-size:11px;line-height:12.65px;color:#222;white-space:nowrap;text-align:right;">2</div><div style="position:absolute;left:1005.3px;top:807.46px;width:400px;font-size:11px;line-height:12.65px;color:#222;white-space:nowrap;text-align:right;">1 360,00</div><div style="position:absolute;left:1062px;top:807.46px;width:400px;font-size:11px;line-height:12.65px;color:#222;white-space:nowrap;text-align:right;">2 100,00</div><div style="position:absolute;left:931px;top:826.46px;font-size:11px;line-height:12.65px;color:#222;white-space:nowrap;text-align:left;">Юридическая компания</div><div style="position:absolute;left:848px;top:826.46px;width:400px;font-size:11px;line-height:12.65px;color:#222;white-space:nowrap;text-align:right;">6</div><div style="position:absolute;left:932.5px;top:826.46px;width:400px;font-size:11px;line-height:12.65px;color:#222;white-space:nowrap;text-align:right;">6</div><div style="position:absolute;left:1005.3px;top:826.46px;width:400px;font-size:11px;line-height:12.65px;color:#222;white-space:nowrap;text-align:right;">1 020,00</div><div style="position:absolute;left:1062px;top:826.46px;width:400px;font-size:11px;line-height:12.65px;color:#222;white-space:nowrap;text-align:right;">409,50</div><div style="position:absolute;left:1570.4px;top:826.46px;font-size:11px;line-height:12.65px;color:#222;white-space:nowrap;text-align:left;">за наличный расчет</div><div style="position:absolute;left:280.7px;top:179.26px;font-size:16px;line-height:18.4px;color:#3535c6;white-space:nowrap;text-align:left;-webkit-text-stroke:0.55px #3535c6;letter-spacing:1.33px">Менеджеру надо согласовать ремонт картриджа</div><div style="position:absolute;left:284px;top:333.96px;font-size:16px;line-height:18.4px;color:#3535c6;white-space:nowrap;text-align:left;-webkit-text-stroke:0.55px #3535c6;letter-spacing:1.32px">Менеджеру надо согласовать ремонт техники</div><div style="position:absolute;left:1061.5px;top:117.66px;font-size:16px;line-height:18.4px;color:#3535c6;white-space:nowrap;text-align:left;-webkit-text-stroke:0.55px #3535c6;letter-spacing:1.2px">Эти счета предстоит еще только выставить.</div><div style="position:absolute;left:1061.5px;top:136.76px;font-size:16px;line-height:18.4px;color:#3535c6;white-space:nowrap;text-align:left;-webkit-text-stroke:0.55px #3535c6;letter-spacing:1.15px">Появляются сразу после выполнения работ.</div><div style="position:absolute;left:228.3px;top:658.96px;font-size:16px;line-height:18.4px;color:#3535c6;white-space:nowrap;text-align:left;-webkit-text-stroke:0.55px #3535c6;letter-spacing:1.31px">Картриджи и техника на выдаче. Невозможно что-то &quot;потерять или забыть&quot;.</div></div>
<div style="position:absolute;left:1802px;top:0px;width:9px;height:857px;background:linear-gradient(to right,#868686 0px,#a6a6a6 2px,#c6c6c6 4px,#e4e4e4 6.5px,#f7f7f7 9px)"></div>
<div style="position:absolute;left:1802px;top:0px;width:9px;height:8px;background:linear-gradient(to bottom,#fff,rgba(255,255,255,0))"></div>
<div style="position:absolute;left:0px;top:857px;width:1802px;height:9px;background:linear-gradient(to bottom,#868686 0px,#a6a6a6 2px,#c6c6c6 4px,#e4e4e4 6.5px,#f7f7f7 9px)"></div>
<div style="position:absolute;left:0px;top:857px;width:8px;height:9px;background:linear-gradient(to right,#fff,rgba(255,255,255,0))"></div>
<div style="position:absolute;left:1802px;top:857px;width:9px;height:9px;background:radial-gradient(circle at 0 0,#a0a0a0 0px,#cfcfcf 4px,#ececec 7px,#fafafa 11px)"></div>
<div style="position:absolute;left:1660px;top:839.5px;font-family:'Liberation Serif',serif;font-style:italic;font-weight:bold;font-size:18.5px;line-height:20px;color:#c8c8c8;letter-spacing:1.1px;-webkit-text-stroke:0.7px #6a6a6a;text-shadow:1px 1.5px 0.5px #202020;white-space:nowrap;filter:url(#crisp)">www.testcopy.ru</div>
</body></html>
